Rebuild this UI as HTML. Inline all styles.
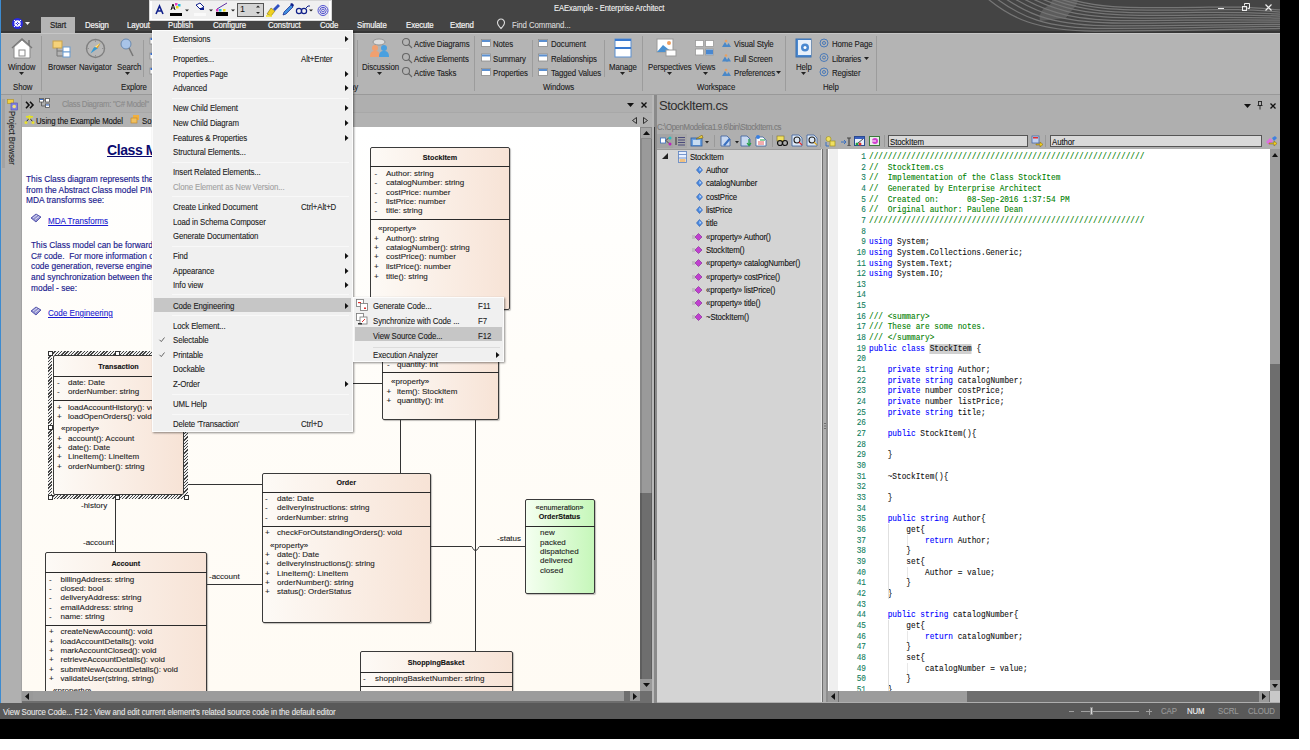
<!DOCTYPE html>
<html><head><meta charset="utf-8">
<style>
*{margin:0;padding:0;box-sizing:border-box}
html,body{width:1310px;height:750px;overflow:hidden;background:#fff;font-family:"Liberation Sans",sans-serif;}
.a{position:absolute;white-space:nowrap}
.t{position:absolute;white-space:nowrap;font-size:8.7px;letter-spacing:-0.1px;line-height:12px;color:#1a1a1a;-webkit-text-stroke:0.1px currentColor;transform:scaleX(0.9);transform-origin:0 0}
.mono{font-family:"Liberation Mono",monospace;white-space:pre}
#win{position:absolute;left:0;top:0;width:1280px;height:719px;background:#b4b4b4;overflow:hidden}
</style></head><body>
<!-- shadow -->
<div class="a" style="left:1280px;top:0;width:19px;height:739px;background:#000"></div>
<div class="a" style="left:0;top:719px;width:1299px;height:20px;background:#000"></div>
<div id="win">
  <!-- title bar -->
  <div class="a" style="left:0;top:0;width:1280px;height:33px;background:#444"></div>
<div class="a" style="left:0;top:31px;width:1280px;height:2px;background:#363636"></div>
<div class="a" style="left:0;top:33px;width:1280px;height:1px;background:#c6c6c6"></div>
  <div class="a" style="left:0;top:0;width:1px;height:719px;background:#3d8bd0"></div>
  <!-- RIBBON -->
<div class="t" style="left:554px;top:2px;font-size:8.5px;color:#f2f2f2">EAExample - Enterprise Architect</div>
<!-- title swirls -->
<svg class="a" style="left:960px;top:0" width="320" height="33" viewBox="0 0 320 33"><g fill="#5c5c5c"><path d="M80 21 C78 13 84 7 90 5 L92 0 L118 0 L116 6 C112 10 108 14 106 18Z"/></g><g fill="none"><path d="M28 -1 C50 17 75 31.0 135 31.0 S265 30.0 330 28.0" stroke="#767676" stroke-width="1.25"/><path d="M37 -1 C60 16 85 28.4 144 28.4 S265 27.2 330 26.1" stroke="#767676" stroke-width="1.25"/><path d="M46 -1 C70 15 95 25.8 153 25.8 S265 24.4 330 24.2" stroke="#767676" stroke-width="1.25"/><path d="M55 -1 C80 14 105 23.2 162 23.2 S265 21.6 330 22.3" stroke="#767676" stroke-width="1.25"/><path d="M64 -1 C90 13 115 20.6 171 20.6 S265 18.8 330 20.4" stroke="#767676" stroke-width="1.25"/><path d="M73 -1 C100 12 125 18.0 180 18.0 S265 16.0 330 18.5" stroke="#767676" stroke-width="1.25"/><path d="M82 -1 C110 11 135 15.4 189 15.4 S265 13.2 330 16.6" stroke="#767676" stroke-width="1.25"/><path d="M91 -1 C120 10 145 12.8 198 12.8 S265 10.4 330 14.7" stroke="#767676" stroke-width="1.25"/><path d="M100 -1 C130 9 155 10.2 207 10.2 S265 7.6 330 12.8" stroke="#767676" stroke-width="1.25"/><path d="M109 -1 C140 8 165 7.6 216 7.6 S265 4.8 330 10.9" stroke="#767676" stroke-width="1.25"/></g></svg>
<!-- window controls -->
<div class="a" style="left:1218px;top:8px;width:6px;height:1px;background:#eee"></div>
<svg class="a" style="left:1241px;top:3px" width="9" height="9"><path d="M3.5 2.5V.5h5v5h-2" fill="none" stroke="#eee" stroke-width="1"/><rect x="1.5" y="3.5" width="4" height="4" fill="none" stroke="#eee" stroke-width="1"/></svg>
<svg class="a" style="left:1264px;top:3px" width="9" height="9"><path d="M1.5 1.5L7.5 7.5M7.5 1.5L1.5 7.5" stroke="#eee" stroke-width="1.2"/></svg>
<!-- app icon -->
<svg class="a" style="left:11px;top:17px" width="22" height="13"><circle cx="6.5" cy="6.5" r="5.5" fill="#2a2ae0"/><circle cx="6.5" cy="6.5" r="2.5" fill="none" stroke="#fff" stroke-width="1.3"/><path d="M3 3L10 10M10 3L3 10" stroke="#fff" stroke-width="1"/><path d="M14 5h5l-2.5 3z" fill="#eee"/></svg>
<!-- tabs -->
<div class="a" style="left:41px;top:17px;width:34px;height:16px;background:#b4b4b4"></div>
<div class="t" style="left:50px;top:19px;color:#222;-webkit-text-stroke:0.2px #222">Start</div>
<div class="t" style="left:85px;top:19px;color:#f4f4f4;-webkit-text-stroke:0.2px #f4f4f4">Design</div>
<div class="t" style="left:127px;top:19px;color:#f4f4f4;-webkit-text-stroke:0.2px #f4f4f4">Layout</div>
<div class="t" style="left:168px;top:19px;color:#f4f4f4;-webkit-text-stroke:0.2px #f4f4f4">Publish</div>
<div class="t" style="left:213px;top:19px;color:#f4f4f4;-webkit-text-stroke:0.2px #f4f4f4">Configure</div>
<div class="t" style="left:268px;top:19px;color:#f4f4f4;-webkit-text-stroke:0.2px #f4f4f4">Construct</div>
<div class="t" style="left:320px;top:19px;color:#f4f4f4;-webkit-text-stroke:0.2px #f4f4f4">Code</div>
<div class="t" style="left:357px;top:19px;color:#f4f4f4;-webkit-text-stroke:0.2px #f4f4f4">Simulate</div>
<div class="t" style="left:406px;top:19px;color:#f4f4f4;-webkit-text-stroke:0.2px #f4f4f4">Execute</div>
<div class="t" style="left:450px;top:19px;color:#f4f4f4;-webkit-text-stroke:0.2px #f4f4f4">Extend</div>
<svg class="a" style="left:496px;top:18px" width="10" height="12"><path d="M5 1a3.5 3.5 0 0 1 3.5 3.5c0 2.5-3.5 6-3.5 6s-3.5-3.5-3.5-6A3.5 3.5 0 0 1 5 1z" fill="none" stroke="#ddd" stroke-width="1.1"/></svg>
<div class="t" style="left:512px;top:19px;color:#dcdcdc">Find Command...</div>
<!-- ribbon body bottom line -->
<div class="a" style="left:1px;top:94px;width:1279px;height:1px;background:#999"></div>
<!-- separators -->
<div class="a" style="left:41px;top:36px;width:1px;height:55px;background:#9c9c9c"></div>
<div class="a" style="left:143px;top:40px;width:1px;height:37px;background:#9c9c9c"></div>
<div class="a" style="left:357px;top:40px;width:1px;height:37px;background:#9c9c9c"></div>
<div class="a" style="left:474px;top:36px;width:1px;height:55px;background:#9c9c9c"></div>
<div class="a" style="left:532px;top:40px;width:1px;height:37px;background:#9c9c9c"></div>
<div class="a" style="left:604px;top:40px;width:1px;height:37px;background:#9c9c9c"></div>
<div class="a" style="left:642px;top:36px;width:1px;height:55px;background:#9c9c9c"></div>
<div class="a" style="left:785px;top:36px;width:1px;height:55px;background:#9c9c9c"></div>
<div class="a" style="left:876px;top:36px;width:1px;height:55px;background:#9c9c9c"></div>
<!-- Window -->
<svg class="a" style="left:11px;top:38px" width="22" height="21"><path d="M1 10L11 1L21 10" fill="none" stroke="#777" stroke-width="1.5"/><path d="M18 2v5" stroke="#777" stroke-width="1.5"/><path d="M3 9L11 2L19 9V20H3Z" fill="#fff" stroke="#888" stroke-width="1"/><rect x="8" y="12" width="6" height="6" fill="#fff" stroke="#888"/></svg>
<div class="t" style="left:8px;top:61px">Window</div>
<svg class="a" style="left:19px;top:72px" width="5" height="3"><path d="M0 0h5l-2.5 3z" fill="#222"/></svg>
<div class="t" style="left:13px;top:81px">Show</div>
<!-- Browser -->
<svg class="a" style="left:52px;top:40px" width="19" height="18"><rect x="1" y="1" width="9" height="7" fill="#f5d27a" stroke="#c9a24a"/><path d="M5 8v8h7M5 11h7" stroke="#777" fill="none"/><rect x="11" y="7" width="7" height="5" fill="#fff" stroke="#6a9bd0"/><rect x="11" y="12" width="7" height="5" fill="#fff" stroke="#6a9bd0"/></svg>
<div class="t" style="left:48px;top:61px">Browser</div>
<!-- Navigator -->
<svg class="a" style="left:85px;top:38px" width="21" height="21"><circle cx="10.5" cy="10.5" r="9" fill="#b8b8b8" stroke="#808080" stroke-width="1.4"/><path d="M10.5 2.5v1.5M10.5 17v1.5M2.5 10.5h1.5M17 10.5h1.5" stroke="#888" stroke-width=".8"/><path d="M15.5 5L8.5 10L5.5 15.5L12.5 10.5z" fill="#3a9ad0"/><path d="M15.5 5L10 8.5L12.5 10.5z" fill="#f0a020"/><path d="M15.5 5L10 8.5L11 9.5z" fill="#fff2a0"/></svg>
<div class="t" style="left:79px;top:61px">Navigator</div>
<!-- Search -->
<svg class="a" style="left:120px;top:38px" width="14" height="20"><circle cx="6" cy="6" r="5" fill="#a8c4e8" stroke="#6a8ab0"/><path d="M9 10l4 8" stroke="#777" stroke-width="1.5"/></svg>
<div class="t" style="left:117px;top:61px">Search</div>
<svg class="a" style="left:125px;top:72px" width="5" height="3"><path d="M0 0h5l-2.5 3z" fill="#222"/></svg>
<div class="t" style="left:121px;top:81px">Explore</div>
<!-- partial-icons --><svg class="a" style="left:148px;top:37px" width="5" height="40"><g fill="#fff" stroke="#888" stroke-width=".8"><rect x="2" y="1" width="6" height="6"/><rect x="2" y="16" width="6" height="6"/><rect x="2" y="31" width="6" height="6"/></g><g fill="#3a70d0"><rect x="2.5" y="1" width="2" height="2"/><rect x="2.5" y="16" width="2" height="2"/><rect x="2.5" y="31" width="2" height="2"/></g></svg>
<!-- Discussion -->
<svg class="a" style="left:369px;top:38px" width="22" height="20"><ellipse cx="10" cy="4" rx="6" ry="3" fill="#ddd" stroke="#888" stroke-width=".8"/><circle cx="6" cy="10" r="3" fill="#f0a070"/><path d="M1 19c0-5 2-6 5-6s5 1 5 6z" fill="#f0a070"/><circle cx="15" cy="10" r="3" fill="#4aa0e0"/><path d="M10 19c0-5 2-6 5-6s5 1 5 6z" fill="#4aa0e0"/></svg>
<div class="t" style="left:362px;top:61px">Discussion</div>
<svg class="a" style="left:377px;top:72px" width="5" height="3"><path d="M0 0h5l-2.5 3z" fill="#222"/></svg>
<div class="t" style="left:350px;top:81px">ay</div>
<!-- Active -->
<svg class="a" style="left:401px;top:37px" width="12" height="42"><g fill="none" stroke="#666" stroke-width="1.1"><circle cx="5" cy="5" r="3.5"/><path d="M7.5 7.5l3.5 3.5"/><circle cx="5" cy="20" r="3.5"/><path d="M7.5 22.5l3.5 3.5"/><circle cx="5" cy="34" r="3.5"/><path d="M7.5 36.5l3.5 3.5"/></g></svg>
<div class="t" style="left:414px;top:38px">Active Diagrams</div>
<div class="t" style="left:414px;top:53px">Active Elements</div>
<div class="t" style="left:414px;top:67px">Active Tasks</div>
<!-- Notes etc -->
<svg class="a" style="left:481px;top:39px" width="11" height="40"><g fill="#fff" stroke="#8a8a8a" stroke-width=".8"><rect x=".5" y=".5" width="9" height="7"/><rect x=".5" y="15" width="9" height="7"/><rect x=".5" y="29.5" width="9" height="7"/></g><g fill="#5b8fd0"><rect x="1" y="1" width="8" height="2"/><rect x="1" y="15.5" width="8" height="2"/><rect x="1" y="30" width="8" height="2"/></g></svg>
<div class="t" style="left:493px;top:38px">Notes</div>
<div class="t" style="left:493px;top:53px">Summary</div>
<div class="t" style="left:493px;top:67px">Properties</div>
<svg class="a" style="left:538px;top:39px" width="11" height="40"><g fill="#fff" stroke="#8a8a8a" stroke-width=".8"><rect x=".5" y=".5" width="9" height="7"/><rect x=".5" y="15" width="9" height="7"/><rect x=".5" y="29.5" width="9" height="7"/></g><g fill="#5b8fd0"><rect x="1" y="1" width="8" height="2"/><rect x="1" y="15.5" width="8" height="2"/><rect x="1" y="30" width="8" height="2"/></g></svg>
<div class="t" style="left:551px;top:38px">Document</div>
<div class="t" style="left:551px;top:53px">Relationships</div>
<div class="t" style="left:551px;top:67px">Tagged Values</div>
<div class="t" style="left:543px;top:81px">Windows</div>
<!-- Manage -->
<svg class="a" style="left:614px;top:38px" width="18" height="20"><rect x="1" y="1" width="16" height="18" fill="#fff" stroke="#5b8fd0" stroke-width="1"/><rect x="1" y="1" width="16" height="2" fill="#3a7ad0"/><rect x="1" y="9" width="16" height="2" fill="#3a7ad0"/></svg>
<div class="t" style="left:609px;top:61px">Manage</div>
<svg class="a" style="left:620px;top:72px" width="5" height="3"><path d="M0 0h5l-2.5 3z" fill="#222"/></svg>
<!-- Perspectives -->
<svg class="a" style="left:656px;top:38px" width="22" height="20"><rect x="1" y="1" width="16" height="13" fill="#fff" stroke="#999"/><path d="M1 14L7 7L12 11L17 14z" fill="#4a90d0"/><circle cx="13" cy="5" r="2" fill="#f0a060"/><rect x="10" y="12" width="10" height="6" fill="#fff" stroke="#999"/></svg>
<div class="t" style="left:648px;top:61px">Perspectives</div>
<svg class="a" style="left:667px;top:72px" width="5" height="3"><path d="M0 0h5l-2.5 3z" fill="#222"/></svg>
<!-- Views -->
<svg class="a" style="left:695px;top:40px" width="20" height="17"><g fill="#fff" stroke="#999" stroke-width=".8"><rect x=".5" y=".5" width="8" height="6"/><rect x="10.5" y=".5" width="8" height="6"/><rect x=".5" y="9" width="8" height="6"/><rect x="10.5" y="9" width="8" height="6"/></g><rect x="11" y="9.5" width="7" height="5" fill="#4a88d0"/></svg>
<div class="t" style="left:695px;top:61px">Views</div>
<svg class="a" style="left:703px;top:72px" width="5" height="3"><path d="M0 0h5l-2.5 3z" fill="#222"/></svg>
<svg class="a" style="left:721px;top:39px" width="11" height="40"><g fill="#4a88c8"><path d="M1 8l3-5 3 5z"/><path d="M5 8l2.5-4 2.5 4z"/><path d="M1 22.5l3-5 3 5z"/><path d="M5 22.5l2.5-4 2.5 4z"/><path d="M1 37l3-5 3 5z"/><path d="M5 37l2.5-4 2.5 4z"/></g><g fill="#e8a060"><circle cx="5" cy="2" r="1.3"/><circle cx="5" cy="16.5" r="1.3"/><circle cx="5" cy="31" r="1.3"/></g></svg>
<div class="t" style="left:734px;top:38px">Visual Style</div>
<div class="t" style="left:734px;top:53px">Full Screen</div>
<div class="t" style="left:734px;top:67px">Preferences</div>
<svg class="a" style="left:776px;top:71px" width="5" height="3"><path d="M0 0h5l-2.5 3z" fill="#222"/></svg>
<div class="t" style="left:697px;top:81px">Workspace</div>
<!-- Help -->
<svg class="a" style="left:795px;top:38px" width="18" height="20"><rect x="1" y="1" width="15" height="18" fill="#4a88d0" stroke="#3a70b0"/><rect x="3" y="2" width="13" height="15" fill="#e8f0fa"/><circle cx="10" cy="9.5" r="4" fill="#4a88d0"/><circle cx="10" cy="9.5" r="1.5" fill="#fff"/></svg>
<div class="t" style="left:796px;top:61px">Help</div>
<svg class="a" style="left:801px;top:72px" width="5" height="3"><path d="M0 0h5l-2.5 3z" fill="#222"/></svg>
<svg class="a" style="left:819px;top:38px" width="11" height="42"><g fill="none" stroke="#4a7ab8" stroke-width="1"><circle cx="5" cy="5" r="4"/><circle cx="5" cy="5" r="1.5"/><circle cx="5" cy="19.5" r="4"/><circle cx="5" cy="19.5" r="1.5"/><circle cx="5" cy="34" r="4"/><circle cx="5" cy="34" r="1.5"/></g></svg>
<div class="t" style="left:832px;top:38px">Home Page</div>
<div class="t" style="left:832px;top:53px">Libraries</div>
<svg class="a" style="left:864px;top:57px" width="5" height="3"><path d="M0 0h5l-2.5 3z" fill="#222"/></svg>
<div class="t" style="left:832px;top:67px">Register</div>
<div class="t" style="left:823px;top:81px">Help</div>

  <!--DIAG--><div class="a" style="left:1px;top:95px;width:21px;height:608px;background:#b0b0b0;border-right:1px solid #a2a2a2"></div>
<div class="a" style="left:2px;top:99px;width:3px;height:69px;background:#a3a3a3"></div>
<svg class="a" style="left:7px;top:99px" width="11" height="12"><rect x="0.5" y="0.5" width="6" height="4" fill="#f0d040" stroke="#b09020" stroke-width=".6"/><rect x="4" y="4" width="6.5" height="7" fill="#8080e0" stroke="#5050b0" stroke-width=".6"/><circle cx="7.2" cy="7.5" r="1.8" fill="#f0e080"/></svg>
<div class="t" style="left:17.5px;top:111px;transform-origin:0 0;transform:rotate(90deg) scaleX(0.9);color:#222">Project Browser</div>
<div class="a" style="left:22px;top:95px;width:630px;height:17px;background:#afafaf"></div>
<div class="a" style="left:22px;top:112px;width:630px;height:15px;background:#b2b2b2;border-top:1px solid #a8a8a8"></div>
<svg class="a" style="left:25px;top:101px" width="10" height="8"><path d="M1 .8L4 4 1 7.2M5 .8L8 4 5 7.2" fill="none" stroke="#111" stroke-width="1.6"/></svg>
<svg class="a" style="left:39px;top:98px" width="12" height="11"><g fill="#fff" stroke="#555" stroke-width=".8"><rect x=".5" y=".5" width="4" height="3.5"/><rect x="6.5" y=".5" width="4" height="3.5"/><rect x="6.5" y="6" width="4" height="3.5"/></g><path d="M4.5 2h2M2.5 4v4h4" stroke="#555" fill="none" stroke-width=".8"/><rect x="1" y="1" width="3" height="1" fill="#3a70d0"/><rect x="7" y="6.5" width="3" height="1" fill="#3a70d0"/></svg>
<div class="t" style="left:62px;top:98px;color:#8a8a8a;letter-spacing:-0.35px">Class Diagram: "C# Model"</div>
<svg class="a" style="left:627px;top:103px" width="7" height="4"><path d="M0 0h7l-3.5 4z" fill="#111"/></svg>
<svg class="a" style="left:641px;top:101.5px" width="6" height="6"><path d="M.5 .5l5 5M5.5 .5l-5 5" stroke="#111" stroke-width="1.4"/></svg>
<svg class="a" style="left:24px;top:114px" width="11" height="11"><path d="M5.5 1L2 3.5h7z" fill="#e8e030"/><rect x="2" y="2" width="7" height="1.5" fill="#e0e020"/><path d="M5.5 4L2 8M5.5 4L9 8" stroke="#223" stroke-width="1"/><circle cx="2" cy="8.5" r="1.5" fill="#e8e030"/><circle cx="9" cy="8.5" r="1.5" fill="#e8e030"/><circle cx="5.5" cy="4.5" r="1.2" fill="#e8e030"/></svg>
<div class="t" style="left:36px;top:115px;color:#111">Using the Example Model</div>
<div class="a" style="left:22px;top:127px;width:618px;height:1px;background:#8a8a8a"></div>
<svg class="a" style="left:130px;top:114px" width="10" height="10"><rect x="3" y="1" width="6" height="5" fill="#f0b040"/><rect x="1" y="4" width="6" height="5" fill="#f0c060" stroke="#c08020" stroke-width=".6"/></svg>
<div class="t" style="left:142px;top:115px;color:#111">So</div>
<svg class="a" style="left:632px;top:117px" width="5" height="7"><path d="M4.5 .5v6L.5 3.5z" fill="none" stroke="#222" stroke-width=".9"/></svg>
<svg class="a" style="left:643px;top:117px" width="5" height="7"><path d="M.5 .5v6l4-3z" fill="none" stroke="#222" stroke-width=".9"/></svg>
<div class="a" style="left:22px;top:127px;width:618px;height:564px;background:linear-gradient(180deg,#ffffff 0%,#fffdf9 40%,#fffbf4 100%);overflow:hidden" id="canvas">
<div class="a" style="left:0;top:0;width:619px;height:6px;background:#fff"></div>
<div class="a" style="left:85px;top:15px;font-size:14px;font-weight:bold;color:#0b0b70;text-decoration:underline;line-height:16px;letter-spacing:-0.4px">Class Model</div>
<div class="a" style="left:4px;top:47px;font-size:8px;line-height:10px;color:#222;-webkit-text-stroke:0.1px currentColor;color:#1a1a8e;font-size:9px;transform:scaleX(0.93);transform-origin:0 0;-webkit-text-stroke:0.15px currentColor">This Class diagram represents the Class model for the</div>
<div class="a" style="left:4px;top:58px;font-size:8px;line-height:10px;color:#222;-webkit-text-stroke:0.1px currentColor;color:#1a1a8e;font-size:9px;transform:scaleX(0.93);transform-origin:0 0;-webkit-text-stroke:0.15px currentColor">from the Abstract Class model PIM using the C# and</div>
<div class="a" style="left:4px;top:68px;font-size:8px;line-height:10px;color:#222;-webkit-text-stroke:0.1px currentColor;color:#1a1a8e;font-size:9px;transform:scaleX(0.93);transform-origin:0 0;-webkit-text-stroke:0.15px currentColor">MDA transforms see:</div>
<div class="a" style="left:9px;top:113px;font-size:8px;line-height:10px;color:#222;-webkit-text-stroke:0.1px currentColor;color:#1a1a8e;font-size:9px;transform:scaleX(0.93);transform-origin:0 0;-webkit-text-stroke:0.15px currentColor">This Class model can be forward engineered to</div>
<div class="a" style="left:9px;top:124px;font-size:8px;line-height:10px;color:#222;-webkit-text-stroke:0.1px currentColor;color:#1a1a8e;font-size:9px;transform:scaleX(0.93);transform-origin:0 0;-webkit-text-stroke:0.15px currentColor">C# code.&nbsp; For more information on</div>
<div class="a" style="left:9px;top:134px;font-size:8px;line-height:10px;color:#222;-webkit-text-stroke:0.1px currentColor;color:#1a1a8e;font-size:9px;transform:scaleX(0.93);transform-origin:0 0;-webkit-text-stroke:0.15px currentColor">code generation, reverse engineering</div>
<div class="a" style="left:9px;top:145px;font-size:8px;line-height:10px;color:#222;-webkit-text-stroke:0.1px currentColor;color:#1a1a8e;font-size:9px;transform:scaleX(0.93);transform-origin:0 0;-webkit-text-stroke:0.15px currentColor">and synchronization between the code and</div>
<div class="a" style="left:9px;top:156px;font-size:8px;line-height:10px;color:#222;-webkit-text-stroke:0.1px currentColor;color:#1a1a8e;font-size:9px;transform:scaleX(0.93);transform-origin:0 0;-webkit-text-stroke:0.15px currentColor">model - see:</div>
<svg class="a" style="left:8px;top:86px" width="12" height="10"><path d="M1 5L6 1L11 4L6 9Z" fill="#9090d0" stroke="#4040a0" stroke-width=".8"/><path d="M3 5l4-3M5 6.5l4-3" stroke="#fff" stroke-width=".7"/></svg>
<div class="a" style="left:26px;top:89px;font-size:8px;line-height:10px;color:#222;-webkit-text-stroke:0.1px currentColor;color:#1a1ad0;text-decoration:underline;font-size:8.5px;transform:scaleX(0.95);transform-origin:0 0">MDA Transforms</div>
<svg class="a" style="left:8px;top:179px" width="12" height="10"><path d="M1 5L6 1L11 4L6 9Z" fill="#9090d0" stroke="#4040a0" stroke-width=".8"/><path d="M3 5l4-3M5 6.5l4-3" stroke="#fff" stroke-width=".7"/></svg>
<div class="a" style="left:26px;top:181px;font-size:8px;line-height:10px;color:#222;-webkit-text-stroke:0.1px currentColor;color:#1a1ad0;text-decoration:underline;font-size:8.5px;transform:scaleX(0.95);transform-origin:0 0">Code Engineering</div>
<div class="a" style="left:348px;top:19.5px;width:140px;height:163.5px;border:1px solid #3a3a3a;border-radius:2px;background:linear-gradient(90deg,#fdfaf6,#f7e3d6);box-shadow:1px 1px 1px rgba(0,0,0,.25)"></div>
<div class="a" style="left:348px;top:38.5px;width:140px;height:1px;background:#2a2a2a"></div>
<div class="a" style="left:352.5px;top:42px;font-size:8px;line-height:10px;color:#222;-webkit-text-stroke:0.1px currentColor;">-</div>
<div class="a" style="left:364px;top:42px;font-size:8px;line-height:10px;color:#222;-webkit-text-stroke:0.1px currentColor;">Author: string</div>
<div class="a" style="left:352.5px;top:51px;font-size:8px;line-height:10px;color:#222;-webkit-text-stroke:0.1px currentColor;">-</div>
<div class="a" style="left:364px;top:51px;font-size:8px;line-height:10px;color:#222;-webkit-text-stroke:0.1px currentColor;">catalogNumber: string</div>
<div class="a" style="left:352.5px;top:61px;font-size:8px;line-height:10px;color:#222;-webkit-text-stroke:0.1px currentColor;">-</div>
<div class="a" style="left:364px;top:61px;font-size:8px;line-height:10px;color:#222;-webkit-text-stroke:0.1px currentColor;">costPrice: number</div>
<div class="a" style="left:352.5px;top:70px;font-size:8px;line-height:10px;color:#222;-webkit-text-stroke:0.1px currentColor;">-</div>
<div class="a" style="left:364px;top:70px;font-size:8px;line-height:10px;color:#222;-webkit-text-stroke:0.1px currentColor;">listPrice: number</div>
<div class="a" style="left:352.5px;top:79px;font-size:8px;line-height:10px;color:#222;-webkit-text-stroke:0.1px currentColor;">-</div>
<div class="a" style="left:364px;top:79px;font-size:8px;line-height:10px;color:#222;-webkit-text-stroke:0.1px currentColor;">title: string</div>
<div class="a" style="left:348px;top:91.5px;width:140px;height:1px;background:#2a2a2a"></div>
<div class="a" style="left:356px;top:97px;font-size:8px;line-height:10px;color:#222;-webkit-text-stroke:0.1px currentColor;">&#171;property&#187;</div>
<div class="a" style="left:352px;top:107px;font-size:8px;line-height:10px;color:#222;-webkit-text-stroke:0.1px currentColor;">+</div>
<div class="a" style="left:364px;top:107px;font-size:8px;line-height:10px;color:#222;-webkit-text-stroke:0.1px currentColor;">Author(): string</div>
<div class="a" style="left:352px;top:116px;font-size:8px;line-height:10px;color:#222;-webkit-text-stroke:0.1px currentColor;">+</div>
<div class="a" style="left:364px;top:116px;font-size:8px;line-height:10px;color:#222;-webkit-text-stroke:0.1px currentColor;">catalogNumber(): string</div>
<div class="a" style="left:352px;top:125px;font-size:8px;line-height:10px;color:#222;-webkit-text-stroke:0.1px currentColor;">+</div>
<div class="a" style="left:364px;top:125px;font-size:8px;line-height:10px;color:#222;-webkit-text-stroke:0.1px currentColor;">costPrice(): number</div>
<div class="a" style="left:352px;top:135px;font-size:8px;line-height:10px;color:#222;-webkit-text-stroke:0.1px currentColor;">+</div>
<div class="a" style="left:364px;top:135px;font-size:8px;line-height:10px;color:#222;-webkit-text-stroke:0.1px currentColor;">listPrice(): number</div>
<div class="a" style="left:352px;top:145px;font-size:8px;line-height:10px;color:#222;-webkit-text-stroke:0.1px currentColor;">+</div>
<div class="a" style="left:364px;top:145px;font-size:8px;line-height:10px;color:#222;-webkit-text-stroke:0.1px currentColor;">title(): string</div>
<div class="a" style="left:348px;top:26px;width:140px;text-align:center;font-size:7.2px;-webkit-text-stroke:0.1px currentColor;line-height:10px;color:#111;font-weight:bold">StockItem</div>
<div class="a" style="left:359.5px;top:193px;width:117.5px;height:99.5px;border:1px solid #3a3a3a;border-radius:2px;background:linear-gradient(90deg,#fdfaf6,#f7e3d6);box-shadow:1px 1px 1px rgba(0,0,0,.25)"></div>
<div class="a" style="left:359.5px;top:214px;width:117.5px;height:1px;background:#2a2a2a"></div>
<div class="a" style="left:365px;top:224px;font-size:8px;line-height:10px;color:#222;-webkit-text-stroke:0.1px currentColor;">-</div>
<div class="a" style="left:375px;top:224px;font-size:8px;line-height:10px;color:#222;-webkit-text-stroke:0.1px currentColor;">item: StockItem</div>
<div class="a" style="left:365px;top:233px;font-size:8px;line-height:10px;color:#222;-webkit-text-stroke:0.1px currentColor;">-</div>
<div class="a" style="left:375px;top:233px;font-size:8px;line-height:10px;color:#222;-webkit-text-stroke:0.1px currentColor;">quantity: int</div>
<div class="a" style="left:359.5px;top:244.5px;width:117.5px;height:1px;background:#2a2a2a"></div>
<div class="a" style="left:369px;top:250px;font-size:8px;line-height:10px;color:#222;-webkit-text-stroke:0.1px currentColor;">&#171;property&#187;</div>
<div class="a" style="left:364.5px;top:260px;font-size:8px;line-height:10px;color:#222;-webkit-text-stroke:0.1px currentColor;">+</div>
<div class="a" style="left:375px;top:260px;font-size:8px;line-height:10px;color:#222;-webkit-text-stroke:0.1px currentColor;">item(): StockItem</div>
<div class="a" style="left:364.5px;top:269px;font-size:8px;line-height:10px;color:#222;-webkit-text-stroke:0.1px currentColor;">+</div>
<div class="a" style="left:375px;top:269px;font-size:8px;line-height:10px;color:#222;-webkit-text-stroke:0.1px currentColor;">quantity(): int</div>
<div class="a" style="left:359.5px;top:200px;width:117.5px;text-align:center;font-size:7.2px;-webkit-text-stroke:0.1px currentColor;line-height:10px;color:#111;font-weight:bold">LineItem</div>
<div class="a" style="left:31px;top:228px;width:131px;height:140px;border:1px solid #3a3a3a;border-radius:2px;background:linear-gradient(90deg,#fdfaf6,#f7e3d6);box-shadow:1px 1px 1px rgba(0,0,0,.25)"></div>
<div class="a" style="left:31px;top:248.5px;width:131px;height:1px;background:#2a2a2a"></div>
<div class="a" style="left:35px;top:251px;font-size:8px;line-height:10px;color:#222;-webkit-text-stroke:0.1px currentColor;">-</div>
<div class="a" style="left:46px;top:251px;font-size:8px;line-height:10px;color:#222;-webkit-text-stroke:0.1px currentColor;">date: Date</div>
<div class="a" style="left:35px;top:260px;font-size:8px;line-height:10px;color:#222;-webkit-text-stroke:0.1px currentColor;">-</div>
<div class="a" style="left:46px;top:260px;font-size:8px;line-height:10px;color:#222;-webkit-text-stroke:0.1px currentColor;">orderNumber: string</div>
<div class="a" style="left:31px;top:273px;width:131px;height:1px;background:#2a2a2a"></div>
<div class="a" style="left:35px;top:276px;font-size:8px;line-height:10px;color:#222;-webkit-text-stroke:0.1px currentColor;">+</div>
<div class="a" style="left:46px;top:276px;font-size:8px;line-height:10px;color:#222;-webkit-text-stroke:0.1px currentColor;">loadAccountHistory(): void</div>
<div class="a" style="left:35px;top:285px;font-size:8px;line-height:10px;color:#222;-webkit-text-stroke:0.1px currentColor;">+</div>
<div class="a" style="left:46px;top:285px;font-size:8px;line-height:10px;color:#222;-webkit-text-stroke:0.1px currentColor;">loadOpenOrders(): void</div>
<div class="a" style="left:39px;top:297px;font-size:8px;line-height:10px;color:#222;-webkit-text-stroke:0.1px currentColor;">&#171;property&#187;</div>
<div class="a" style="left:35px;top:307px;font-size:8px;line-height:10px;color:#222;-webkit-text-stroke:0.1px currentColor;">+</div>
<div class="a" style="left:46px;top:307px;font-size:8px;line-height:10px;color:#222;-webkit-text-stroke:0.1px currentColor;">account(): Account</div>
<div class="a" style="left:35px;top:316px;font-size:8px;line-height:10px;color:#222;-webkit-text-stroke:0.1px currentColor;">+</div>
<div class="a" style="left:46px;top:316px;font-size:8px;line-height:10px;color:#222;-webkit-text-stroke:0.1px currentColor;">date(): Date</div>
<div class="a" style="left:35px;top:325px;font-size:8px;line-height:10px;color:#222;-webkit-text-stroke:0.1px currentColor;">+</div>
<div class="a" style="left:46px;top:325px;font-size:8px;line-height:10px;color:#222;-webkit-text-stroke:0.1px currentColor;">LineItem(): LineItem</div>
<div class="a" style="left:35px;top:335px;font-size:8px;line-height:10px;color:#222;-webkit-text-stroke:0.1px currentColor;">+</div>
<div class="a" style="left:46px;top:335px;font-size:8px;line-height:10px;color:#222;-webkit-text-stroke:0.1px currentColor;">orderNumber(): string</div>
<div class="a" style="left:31px;top:235px;width:131px;text-align:center;font-size:7.2px;-webkit-text-stroke:0.1px currentColor;line-height:10px;color:#111;font-weight:bold">Transaction</div>
<div class="a" style="left:26px;top:224px;width:140px;height:148px;border:4px solid transparent;border-image:repeating-linear-gradient(-45deg,#444 0 1px,#eeeeee 1px 2.3px) 4;pointer-events:none"></div>
<div class="a" style="left:26px;top:224px;width:5px;height:5px;background:#fff;border:1px solid #333"></div>
<div class="a" style="left:26px;top:298px;width:5px;height:5px;background:#fff;border:1px solid #333"></div>
<div class="a" style="left:26px;top:368px;width:5px;height:5px;background:#fff;border:1px solid #333"></div>
<div class="a" style="left:93px;top:224px;width:5px;height:5px;background:#fff;border:1px solid #333"></div>
<div class="a" style="left:93px;top:368px;width:5px;height:5px;background:#fff;border:1px solid #333"></div>
<div class="a" style="left:162px;top:224px;width:5px;height:5px;background:#fff;border:1px solid #333"></div>
<div class="a" style="left:162px;top:298px;width:5px;height:5px;background:#fff;border:1px solid #333"></div>
<div class="a" style="left:162px;top:368px;width:5px;height:5px;background:#fff;border:1px solid #333"></div>
<div class="a" style="left:23px;top:425px;width:161.5px;height:168px;border:1px solid #3a3a3a;border-radius:2px;background:linear-gradient(90deg,#fdfaf6,#f7e3d6);box-shadow:1px 1px 1px rgba(0,0,0,.25)"></div>
<div class="a" style="left:23px;top:444.5px;width:161.5px;height:1px;background:#2a2a2a"></div>
<div class="a" style="left:27px;top:448px;font-size:8px;line-height:10px;color:#222;-webkit-text-stroke:0.1px currentColor;">-</div>
<div class="a" style="left:38.5px;top:448px;font-size:8px;line-height:10px;color:#222;-webkit-text-stroke:0.1px currentColor;">billingAddress: string</div>
<div class="a" style="left:27px;top:457px;font-size:8px;line-height:10px;color:#222;-webkit-text-stroke:0.1px currentColor;">-</div>
<div class="a" style="left:38.5px;top:457px;font-size:8px;line-height:10px;color:#222;-webkit-text-stroke:0.1px currentColor;">closed: bool</div>
<div class="a" style="left:27px;top:466px;font-size:8px;line-height:10px;color:#222;-webkit-text-stroke:0.1px currentColor;">-</div>
<div class="a" style="left:38.5px;top:466px;font-size:8px;line-height:10px;color:#222;-webkit-text-stroke:0.1px currentColor;">deliveryAddress: string</div>
<div class="a" style="left:27px;top:476px;font-size:8px;line-height:10px;color:#222;-webkit-text-stroke:0.1px currentColor;">-</div>
<div class="a" style="left:38.5px;top:476px;font-size:8px;line-height:10px;color:#222;-webkit-text-stroke:0.1px currentColor;">emailAddress: string</div>
<div class="a" style="left:27px;top:485px;font-size:8px;line-height:10px;color:#222;-webkit-text-stroke:0.1px currentColor;">-</div>
<div class="a" style="left:38.5px;top:485px;font-size:8px;line-height:10px;color:#222;-webkit-text-stroke:0.1px currentColor;">name: string</div>
<div class="a" style="left:23px;top:497.5px;width:161.5px;height:1px;background:#2a2a2a"></div>
<div class="a" style="left:27px;top:500px;font-size:8px;line-height:10px;color:#222;-webkit-text-stroke:0.1px currentColor;">+</div>
<div class="a" style="left:38.5px;top:500px;font-size:8px;line-height:10px;color:#222;-webkit-text-stroke:0.1px currentColor;">createNewAccount(): void</div>
<div class="a" style="left:27px;top:510px;font-size:8px;line-height:10px;color:#222;-webkit-text-stroke:0.1px currentColor;">+</div>
<div class="a" style="left:38.5px;top:510px;font-size:8px;line-height:10px;color:#222;-webkit-text-stroke:0.1px currentColor;">loadAccountDetails(): void</div>
<div class="a" style="left:27px;top:519px;font-size:8px;line-height:10px;color:#222;-webkit-text-stroke:0.1px currentColor;">+</div>
<div class="a" style="left:38.5px;top:519px;font-size:8px;line-height:10px;color:#222;-webkit-text-stroke:0.1px currentColor;">markAccountClosed(): void</div>
<div class="a" style="left:27px;top:528px;font-size:8px;line-height:10px;color:#222;-webkit-text-stroke:0.1px currentColor;">+</div>
<div class="a" style="left:38.5px;top:528px;font-size:8px;line-height:10px;color:#222;-webkit-text-stroke:0.1px currentColor;">retrieveAccountDetails(): void</div>
<div class="a" style="left:27px;top:538px;font-size:8px;line-height:10px;color:#222;-webkit-text-stroke:0.1px currentColor;">+</div>
<div class="a" style="left:38.5px;top:538px;font-size:8px;line-height:10px;color:#222;-webkit-text-stroke:0.1px currentColor;">submitNewAccountDetails(): void</div>
<div class="a" style="left:27px;top:547px;font-size:8px;line-height:10px;color:#222;-webkit-text-stroke:0.1px currentColor;">+</div>
<div class="a" style="left:38.5px;top:547px;font-size:8px;line-height:10px;color:#222;-webkit-text-stroke:0.1px currentColor;">validateUser(string, string)</div>
<div class="a" style="left:31px;top:559px;font-size:8px;line-height:10px;color:#222;-webkit-text-stroke:0.1px currentColor;">&#171;property&#187;</div>
<div class="a" style="left:23px;top:432px;width:161.5px;text-align:center;font-size:7.2px;-webkit-text-stroke:0.1px currentColor;line-height:10px;color:#111;font-weight:bold">Account</div>
<div class="a" style="left:239.5px;top:345.5px;width:169.5px;height:150.5px;border:1px solid #3a3a3a;border-radius:2px;background:linear-gradient(90deg,#fdfaf6,#f7e3d6);box-shadow:1px 1px 1px rgba(0,0,0,.25)"></div>
<div class="a" style="left:239.5px;top:364.8px;width:169.5px;height:1px;background:#2a2a2a"></div>
<div class="a" style="left:243px;top:367px;font-size:8px;line-height:10px;color:#222;-webkit-text-stroke:0.1px currentColor;">-</div>
<div class="a" style="left:255px;top:367px;font-size:8px;line-height:10px;color:#222;-webkit-text-stroke:0.1px currentColor;">date: Date</div>
<div class="a" style="left:243px;top:376px;font-size:8px;line-height:10px;color:#222;-webkit-text-stroke:0.1px currentColor;">-</div>
<div class="a" style="left:255px;top:376px;font-size:8px;line-height:10px;color:#222;-webkit-text-stroke:0.1px currentColor;">deliveryInstructions: string</div>
<div class="a" style="left:243px;top:386px;font-size:8px;line-height:10px;color:#222;-webkit-text-stroke:0.1px currentColor;">-</div>
<div class="a" style="left:255px;top:386px;font-size:8px;line-height:10px;color:#222;-webkit-text-stroke:0.1px currentColor;">orderNumber: string</div>
<div class="a" style="left:239.5px;top:398.6px;width:169.5px;height:1px;background:#2a2a2a"></div>
<div class="a" style="left:243px;top:401px;font-size:8px;line-height:10px;color:#222;-webkit-text-stroke:0.1px currentColor;">+</div>
<div class="a" style="left:255px;top:401px;font-size:8px;line-height:10px;color:#222;-webkit-text-stroke:0.1px currentColor;">checkForOutstandingOrders(): void</div>
<div class="a" style="left:248px;top:414px;font-size:8px;line-height:10px;color:#222;-webkit-text-stroke:0.1px currentColor;">&#171;property&#187;</div>
<div class="a" style="left:243px;top:423px;font-size:8px;line-height:10px;color:#222;-webkit-text-stroke:0.1px currentColor;">+</div>
<div class="a" style="left:255px;top:423px;font-size:8px;line-height:10px;color:#222;-webkit-text-stroke:0.1px currentColor;">date(): Date</div>
<div class="a" style="left:243px;top:432px;font-size:8px;line-height:10px;color:#222;-webkit-text-stroke:0.1px currentColor;">+</div>
<div class="a" style="left:255px;top:432px;font-size:8px;line-height:10px;color:#222;-webkit-text-stroke:0.1px currentColor;">deliveryInstructions(): string</div>
<div class="a" style="left:243px;top:442px;font-size:8px;line-height:10px;color:#222;-webkit-text-stroke:0.1px currentColor;">+</div>
<div class="a" style="left:255px;top:442px;font-size:8px;line-height:10px;color:#222;-webkit-text-stroke:0.1px currentColor;">LineItem(): LineItem</div>
<div class="a" style="left:243px;top:451px;font-size:8px;line-height:10px;color:#222;-webkit-text-stroke:0.1px currentColor;">+</div>
<div class="a" style="left:255px;top:451px;font-size:8px;line-height:10px;color:#222;-webkit-text-stroke:0.1px currentColor;">orderNumber(): string</div>
<div class="a" style="left:243px;top:460px;font-size:8px;line-height:10px;color:#222;-webkit-text-stroke:0.1px currentColor;">+</div>
<div class="a" style="left:255px;top:460px;font-size:8px;line-height:10px;color:#222;-webkit-text-stroke:0.1px currentColor;">status(): OrderStatus</div>
<div class="a" style="left:239.5px;top:351px;width:169.5px;text-align:center;font-size:7.2px;-webkit-text-stroke:0.1px currentColor;line-height:10px;color:#111;font-weight:bold">Order</div>
<div class="a" style="left:502.5px;top:372px;width:70.0px;height:94.5px;border:1px solid #3a3a3a;border-radius:2px;background:linear-gradient(90deg,#f4fff0,#c6f7ba);box-shadow:1px 1px 1px rgba(0,0,0,.25)"></div>
<div class="a" style="left:502.5px;top:398.6px;width:70.0px;height:1px;background:#2a2a2a"></div>
<div class="a" style="left:518px;top:401px;font-size:8px;line-height:10px;color:#222;-webkit-text-stroke:0.1px currentColor;">new</div>
<div class="a" style="left:518px;top:411px;font-size:8px;line-height:10px;color:#222;-webkit-text-stroke:0.1px currentColor;">packed</div>
<div class="a" style="left:518px;top:420px;font-size:8px;line-height:10px;color:#222;-webkit-text-stroke:0.1px currentColor;">dispatched</div>
<div class="a" style="left:518px;top:429px;font-size:8px;line-height:10px;color:#222;-webkit-text-stroke:0.1px currentColor;">delivered</div>
<div class="a" style="left:518px;top:439px;font-size:8px;line-height:10px;color:#222;-webkit-text-stroke:0.1px currentColor;">closed</div>
<div class="a" style="left:502.5px;top:376px;width:70.0px;text-align:center;font-size:7.2px;-webkit-text-stroke:0.1px currentColor;line-height:10px;color:#111;">&#171;enumeration&#187;</div>
<div class="a" style="left:502.5px;top:385px;width:70.0px;text-align:center;font-size:7.2px;-webkit-text-stroke:0.1px currentColor;line-height:10px;color:#111;font-weight:bold">OrderStatus</div>
<div class="a" style="left:337.5px;top:524px;width:153.0px;height:69px;border:1px solid #3a3a3a;border-radius:2px;background:linear-gradient(90deg,#fdfaf6,#f7e3d6);box-shadow:1px 1px 1px rgba(0,0,0,.25)"></div>
<div class="a" style="left:337.5px;top:544.5px;width:153.0px;height:1px;background:#2a2a2a"></div>
<div class="a" style="left:341px;top:547px;font-size:8px;line-height:10px;color:#222;-webkit-text-stroke:0.1px currentColor;">-</div>
<div class="a" style="left:353px;top:547px;font-size:8px;line-height:10px;color:#222;-webkit-text-stroke:0.1px currentColor;">shoppingBasketNumber: string</div>
<div class="a" style="left:337.5px;top:559px;width:153.0px;height:1px;background:#2a2a2a"></div>
<div class="a" style="left:337.5px;top:531px;width:153.0px;text-align:center;font-size:7.2px;-webkit-text-stroke:0.1px currentColor;line-height:10px;color:#111;font-weight:bold">ShoppingBasket</div>
<div class="a" style="left:166px;top:356.5px;width:73.5px;height:1px;background:#333"></div>
<div class="a" style="left:166px;top:256px;width:193.5px;height:1px;background:#333"></div>
<div class="a" style="left:93px;top:372px;width:1px;height:53px;background:#333"></div>
<div class="a" style="left:184.5px;top:457px;width:55.0px;height:1px;background:#333"></div>
<div class="a" style="left:378px;top:292.5px;width:1px;height:53.0px;background:#333"></div>
<div class="a" style="left:453px;top:292.5px;width:1px;height:231.5px;background:#333"></div>
<div class="a" style="left:409px;top:419px;width:40px;height:1px;background:#333"></div>
<div class="a" style="left:458px;top:419px;width:44.5px;height:1px;background:#333"></div>
<svg class="a" style="left:448px;top:417px" width="11" height="8"><path d="M0.5 2.5 L1.5 2.5 C2.5 2.5 3 6.5 5.5 6.5 C8 6.5 8.5 2.5 9.5 2.5 L10.5 2.5" fill="none" stroke="#333" stroke-width="1"/></svg>
<div class="a" style="left:59px;top:374px;font-size:8px;line-height:10px;color:#222;-webkit-text-stroke:0.1px currentColor;">-history</div>
<div class="a" style="left:61px;top:411px;font-size:8px;line-height:10px;color:#222;-webkit-text-stroke:0.1px currentColor;">-account</div>
<div class="a" style="left:187px;top:445px;font-size:8px;line-height:10px;color:#222;-webkit-text-stroke:0.1px currentColor;">-account</div>
<div class="a" style="left:475px;top:407px;font-size:8px;line-height:10px;color:#222;-webkit-text-stroke:0.1px currentColor;">-status</div>
</div>
<div class="a" style="left:640px;top:127px;width:12px;height:564px;background:#6e6e6e;border-left:2px solid #5e5e5e;border-right:1px solid #5e5e5e"></div>
<div class="a" style="left:640px;top:127px;width:12px;height:12px;background:#a6a6a6;border:1px solid #8a8a8a"></div>
<svg class="a" style="left:643px;top:131px" width="7" height="4"><path d="M0 4h7L3.5 0z" fill="#111"/></svg>
<div class="a" style="left:640px;top:139px;width:12px;height:354px;background:#9a9a9a;border-left:2px solid #878787;border-right:1px solid #7a7a7a"></div>
<div class="a" style="left:640px;top:679px;width:12px;height:12px;background:#999"></div>
<svg class="a" style="left:643px;top:683px" width="7" height="4"><path d="M0 0h7L3.5 4z" fill="#111"/></svg>
<div class="a" style="left:22px;top:691px;width:630px;height:12px;background:#6e6e6e"></div>
<div class="a" style="left:33px;top:691px;width:591px;height:10px;background:#9c9c9c"></div>
<div class="a" style="left:22px;top:691px;width:11px;height:10px;background:#999"></div>
<svg class="a" style="left:25px;top:693px" width="4" height="7"><path d="M4 0v7L0 3.5z" fill="#111"/></svg>
<div class="a" style="left:630px;top:691px;width:10px;height:10px;background:#999"></div>
<svg class="a" style="left:633px;top:693px" width="4" height="7"><path d="M0 0v7l4-3.5z" fill="#111"/></svg>
<div class="a" style="left:652px;top:95px;width:5px;height:608px;background:#8a8a8a;border-left:2px solid #b8b8b8"></div>
<div class="a" style="left:654px;top:127px;width:1px;height:433px;background:#3a3a3a"></div><!--/DIAG-->
  <!--RIGHT--><div class="a" style="left:657px;top:95px;width:623px;height:608px;background:#afafaf"></div>
<div class="a" style="left:659px;top:98px;font-size:13px;letter-spacing:-0.5px;line-height:16px;color:#2e2e2e">StockItem.cs</div>
<svg class="a" style="left:1244px;top:104px" width="7" height="4"><path d="M0 0h7l-3.5 4z" fill="#111"/></svg>
<svg class="a" style="left:1257px;top:101px" width="6" height="9"><path d="M1 .5h4M1.5 .5v4h3v-4M.5 4.5h5M3 4.5v4" stroke="#222" fill="none" stroke-width=".9"/></svg>
<svg class="a" style="left:1270px;top:103px" width="6" height="6"><path d="M.5 .5l5 5M5.5 .5l-5 5" stroke="#111" stroke-width="1.3"/></svg>
<div class="t" style="left:657px;top:121px;letter-spacing:-0.4px;color:#7a7a7a">C:\OpenModelica1.9.6\bin\StockItem.cs</div>
<div class="a" style="left:657px;top:134px;width:16px;height:14px;background:#a4a4a4"></div>
<div class="a" style="left:673px;top:134px;width:14px;height:14px;background:#a8a8a8"></div>

<svg class="a" style="left:660px;top:136px" width="12" height="10"><rect x="0.5" y="2" width="5" height="5" fill="#fff" stroke="#3a70c0" stroke-width=".8"/><path d="M6 4.5l3-3M6 4.5l3 3" stroke="#333" stroke-width=".8"/><circle cx="10" cy="2" r="1.5" fill="#20c0c0"/><circle cx="10" cy="8" r="1.5" fill="#c020c0"/></svg>
<svg class="a" style="left:675px;top:136px" width="11" height="10"><g stroke="#333" stroke-width="1"><path d="M1 1v8"/><path d="M3 1.5h7M3 4h7M3 6.5h7M3 9h7" stroke="#4a4a7a"/></g></svg>
<svg class="a" style="left:690px;top:135px" width="19" height="12"><rect x="1" y="3" width="11" height="8" fill="#6aa0e0" stroke="#2a5aa0" stroke-width=".8"/><rect x="3" y="5" width="7" height="5" fill="#c8dcf0"/><path d="M6 4L12 0L13 3z" fill="#e8d040" stroke="#806010" stroke-width=".6"/><path d="M15 6h4l-2 2.5z" fill="#222"/></svg>
<svg class="a" style="left:720px;top:135px" width="19" height="12"><path d="M1 1h6l3 3v7H1z" fill="#c8d8f0" stroke="#3a60a0" stroke-width=".8"/><path d="M3 10L9 3l1.5 1.5L5 11z" fill="#3a70c0"/><path d="M15 6h4l-2 2.5z" fill="#222"/></svg>
<svg class="a" style="left:740px;top:135px" width="12" height="12"><path d="M1 1h6l3 3v7H1z" fill="#c8d8f0" stroke="#3a60a0" stroke-width=".8"/><path d="M9 4v6M7 8l2 2.5L11 8" stroke="#20a040" fill="none" stroke-width="1.2"/></svg>
<svg class="a" style="left:755px;top:134px" width="12" height="13"><path d="M1 3h7l3 3v6H1z" fill="#fff" stroke="#3a60a0" stroke-width=".8"/><circle cx="3" cy="3" r="2" fill="#3a80e0"/><path d="M3 8h6M3 10h6" stroke="#e03030" stroke-width=".8"/><path d="M5 6h5" stroke="#20a040"/></svg>
<svg class="a" style="left:776px;top:135px" width="12" height="12"><rect x="1" y="1" width="7" height="5" fill="#f0e060" stroke="#807020" stroke-width=".6"/><circle cx="4" cy="8" r="2.5" fill="none" stroke="#111" stroke-width="1.2"/><circle cx="9" cy="8" r="2.5" fill="none" stroke="#111" stroke-width="1.2"/></svg>
<svg class="a" style="left:791px;top:134px" width="12" height="13"><path d="M1 1h7l3 3v8H1z" fill="#dde8f5" stroke="#3a60a0" stroke-width=".8"/><circle cx="6" cy="6" r="3" fill="none" stroke="#222" stroke-width="1.1"/><path d="M8 8l3 3" stroke="#e03030" stroke-width="1.3"/></svg>
<svg class="a" style="left:806px;top:134px" width="12" height="13"><path d="M1 1h7l3 3v8H1z" fill="#dde8f5" stroke="#3a60a0" stroke-width=".8"/><circle cx="6" cy="6" r="3" fill="none" stroke="#222" stroke-width="1.1"/><path d="M8 8l3 3" stroke="#d0a020" stroke-width="1.3"/></svg>
<svg class="a" style="left:825px;top:136px" width="12" height="11"><circle cx="3.5" cy="3" r="2.5" fill="#f0e060" stroke="#a09020" stroke-width=".7"/><rect x="5" y="5" width="5" height="5" fill="#f0e060" stroke="#a09020" stroke-width=".7"/><path d="M1 6v4h3" stroke="#3a70c0" fill="none"/></svg>
<svg class="a" style="left:841px;top:137px" width="10" height="9"><path d="M0 5h5M3 3l2 2-2 2" stroke="#3a70c0" fill="none" stroke-width="1"/><path d="M6 1h4M8 1v8M6 9h4" stroke="#444" stroke-width="1.2"/></svg>
<svg class="a" style="left:854px;top:136px" width="11" height="11"><rect x=".5" y=".5" width="10" height="9" fill="#e8f0fa" stroke="#2a4a90" stroke-width="1"/><rect x="1" y="1" width="9" height="2" fill="#3a60c0"/><circle cx="3" cy="8" r="1.5" fill="#20a040"/><circle cx="6" cy="8" r="1.5" fill="#e03030"/><path d="M4 7l5-4" stroke="#222" stroke-width=".8"/></svg>
<svg class="a" style="left:869px;top:136px" width="11" height="11"><rect x=".5" y=".5" width="10" height="9" fill="#e8f0e8" stroke="#3a7a3a" stroke-width="1"/><circle cx="6" cy="5" r="3" fill="#d040d0"/><path d="M3 5h4" stroke="#fff"/></svg>

<div class="a" style="left:714px;top:135px;width:1px;height:12px;background:#999"></div>
<div class="a" style="left:772px;top:135px;width:1px;height:12px;background:#999"></div>
<div class="a" style="left:820px;top:135px;width:1px;height:12px;background:#999"></div>
<div class="a" style="left:884px;top:135px;width:1px;height:12px;background:#999"></div>
<div class="a" style="left:1045px;top:135px;width:1px;height:12px;background:#999"></div>
<div class="a" style="left:888px;top:135px;width:140px;height:12px;background:#d9d9d9;border:1px solid #555"></div>
<div class="t" style="left:890px;top:136px;color:#111">StockItem</div>
<svg class="a" style="left:1031px;top:135px" width="12" height="12"><rect x="1" y="1" width="7" height="7" fill="#c0d0f0" stroke="#3a60a0" stroke-width=".7"/><rect x="2" y="2" width="5" height="1.5" fill="#e03030"/><path d="M5 9h4V7l3 2.5-3 2.5v-2H5z" fill="#f0d020" stroke="#806010" stroke-width=".5"/></svg>
<div class="a" style="left:1050px;top:135px;width:212px;height:12px;background:#d9d9d9;border:1px solid #555"></div>
<div class="t" style="left:1052px;top:136px;color:#111">Author</div>
<svg class="a" style="left:1265px;top:135px" width="13" height="12"><path d="M1 7l4-4 3 3-4 4z" fill="#e070e0"/><path d="M7 3l3-2 2 2-3 3z" fill="#4080e0"/><path d="M4 8h5V6l3 2.5-3 2.5V9H4z" fill="#f0d020" stroke="#806010" stroke-width=".5"/></svg>
<div class="a" style="left:657px;top:149px;width:164px;height:553px;background:#d4d4d4;border-top:1px solid #9a9a9a"></div>
<svg class="a" style="left:662px;top:153px" width="7" height="7"><path d="M6 0v6H0z" fill="#222"/></svg>
<svg class="a" style="left:678px;top:151px" width="9" height="12"><rect x=".5" y=".5" width="8" height="11" fill="#e8f0ff" stroke="#5a80c0" stroke-width=".8"/><path d="M.5 3.5h8M.5 7h8" stroke="#5a80c0" stroke-width=".8"/><rect x="1.5" y="8" width="6" height="3" fill="#f0c080"/></svg>
<div class="t" style="left:690px;top:151px;letter-spacing:-0.15px;color:#111">StockItem</div>
<svg class="a" style="left:696px;top:166.0px" width="7" height="8"><path d="M3.5 .5L6.5 4 3.5 7.5 .5 4z" fill="#4a8ae0" stroke="#2a5ab0" stroke-width=".6"/><path d="M3.5 1.5L5.5 4 3.5 5z" fill="#bcd8ff"/></svg>
<div class="t" style="left:706px;top:164.0px;letter-spacing:-0.15px;color:#111">Author</div>
<svg class="a" style="left:696px;top:179.33px" width="7" height="8"><path d="M3.5 .5L6.5 4 3.5 7.5 .5 4z" fill="#4a8ae0" stroke="#2a5ab0" stroke-width=".6"/><path d="M3.5 1.5L5.5 4 3.5 5z" fill="#bcd8ff"/></svg>
<div class="t" style="left:706px;top:177.33px;letter-spacing:-0.15px;color:#111">catalogNumber</div>
<svg class="a" style="left:696px;top:192.66000000000003px" width="7" height="8"><path d="M3.5 .5L6.5 4 3.5 7.5 .5 4z" fill="#4a8ae0" stroke="#2a5ab0" stroke-width=".6"/><path d="M3.5 1.5L5.5 4 3.5 5z" fill="#bcd8ff"/></svg>
<div class="t" style="left:706px;top:190.66000000000003px;letter-spacing:-0.15px;color:#111">costPrice</div>
<svg class="a" style="left:696px;top:205.99000000000004px" width="7" height="8"><path d="M3.5 .5L6.5 4 3.5 7.5 .5 4z" fill="#4a8ae0" stroke="#2a5ab0" stroke-width=".6"/><path d="M3.5 1.5L5.5 4 3.5 5z" fill="#bcd8ff"/></svg>
<div class="t" style="left:706px;top:203.99000000000004px;letter-spacing:-0.15px;color:#111">listPrice</div>
<svg class="a" style="left:696px;top:219.32000000000005px" width="7" height="8"><path d="M3.5 .5L6.5 4 3.5 7.5 .5 4z" fill="#4a8ae0" stroke="#2a5ab0" stroke-width=".6"/><path d="M3.5 1.5L5.5 4 3.5 5z" fill="#bcd8ff"/></svg>
<div class="t" style="left:706px;top:217.32000000000005px;letter-spacing:-0.15px;color:#111">title</div>
<svg class="a" style="left:692px;top:232.65000000000006px" width="11" height="8"><path d="M0 3h3M0 5h3" stroke="#999" stroke-width=".7"/><path d="M6.5 .5L10 4 6.5 7.5 3 4z" fill="#c040d0" stroke="#802090" stroke-width=".6"/></svg>
<div class="t" style="left:706px;top:230.65000000000006px;letter-spacing:-0.15px;color:#111">&#171;property&#187; Author()</div>
<svg class="a" style="left:692px;top:245.98000000000008px" width="11" height="8"><path d="M0 3h3M0 5h3" stroke="#999" stroke-width=".7"/><path d="M6.5 .5L10 4 6.5 7.5 3 4z" fill="#c040d0" stroke="#802090" stroke-width=".6"/></svg>
<div class="t" style="left:706px;top:243.98000000000008px;letter-spacing:-0.15px;color:#111">StockItem()</div>
<svg class="a" style="left:692px;top:259.31000000000006px" width="11" height="8"><path d="M0 3h3M0 5h3" stroke="#999" stroke-width=".7"/><path d="M6.5 .5L10 4 6.5 7.5 3 4z" fill="#c040d0" stroke="#802090" stroke-width=".6"/></svg>
<div class="t" style="left:706px;top:257.31000000000006px;letter-spacing:-0.15px;color:#111">&#171;property&#187; catalogNumber()</div>
<svg class="a" style="left:692px;top:272.64000000000004px" width="11" height="8"><path d="M0 3h3M0 5h3" stroke="#999" stroke-width=".7"/><path d="M6.5 .5L10 4 6.5 7.5 3 4z" fill="#c040d0" stroke="#802090" stroke-width=".6"/></svg>
<div class="t" style="left:706px;top:270.64000000000004px;letter-spacing:-0.15px;color:#111">&#171;property&#187; costPrice()</div>
<svg class="a" style="left:692px;top:285.97px" width="11" height="8"><path d="M0 3h3M0 5h3" stroke="#999" stroke-width=".7"/><path d="M6.5 .5L10 4 6.5 7.5 3 4z" fill="#c040d0" stroke="#802090" stroke-width=".6"/></svg>
<div class="t" style="left:706px;top:283.97px;letter-spacing:-0.15px;color:#111">&#171;property&#187; listPrice()</div>
<svg class="a" style="left:692px;top:299.3px" width="11" height="8"><path d="M0 3h3M0 5h3" stroke="#999" stroke-width=".7"/><path d="M6.5 .5L10 4 6.5 7.5 3 4z" fill="#c040d0" stroke="#802090" stroke-width=".6"/></svg>
<div class="t" style="left:706px;top:297.3px;letter-spacing:-0.15px;color:#111">&#171;property&#187; title()</div>
<svg class="a" style="left:692px;top:312.63px" width="11" height="8"><path d="M0 3h3M0 5h3" stroke="#999" stroke-width=".7"/><path d="M6.5 .5L10 4 6.5 7.5 3 4z" fill="#c040d0" stroke="#802090" stroke-width=".6"/></svg>
<div class="t" style="left:706px;top:310.63px;letter-spacing:-0.15px;color:#111">~StockItem()</div>
<div class="a" style="left:821px;top:149px;width:7px;height:553px;background:#aeaeae;border-left:1px solid #e6e6e6;border-right:2px solid #8e8e8e"></div>
<div class="a" style="left:822px;top:149px;width:1px;height:553px;background:#707070"></div>
<svg class="a" style="left:824px;top:422px" width="3" height="8"><path d="M1 1v1M1 3.5v1M1 6v1" stroke="#333" stroke-width="1"/></svg>
<div class="a" style="left:828px;top:149px;width:442px;height:542px;background:#fff;overflow:hidden">
<div class="a" style="left:1px;top:0;width:9px;height:542px;background:#efefef"></div>
<div class="a mono" style="left:10px;top:2.90px;width:28px;text-align:right;font-size:8.5px;line-height:11px;color:#12805e;-webkit-text-stroke:0.1px currentColor;transform:scaleX(0.915);transform-origin:100% 0">1</div>
<div class="a mono" style="left:41px;top:2.90px;font-size:8.5px;line-height:11px;color:#111;-webkit-text-stroke:0.1px currentColor;transform:scaleX(0.915);transform-origin:0 0"><span style="color:#008000">///////////////////////////////////////////////////////////</span></div>
<div class="a mono" style="left:10px;top:13.56px;width:28px;text-align:right;font-size:8.5px;line-height:11px;color:#12805e;-webkit-text-stroke:0.1px currentColor;transform:scaleX(0.915);transform-origin:100% 0">2</div>
<div class="a mono" style="left:41px;top:13.56px;font-size:8.5px;line-height:11px;color:#111;-webkit-text-stroke:0.1px currentColor;transform:scaleX(0.915);transform-origin:0 0"><span style="color:#008000">//  StockItem.cs</span></div>
<div class="a mono" style="left:10px;top:24.22px;width:28px;text-align:right;font-size:8.5px;line-height:11px;color:#12805e;-webkit-text-stroke:0.1px currentColor;transform:scaleX(0.915);transform-origin:100% 0">3</div>
<div class="a mono" style="left:41px;top:24.22px;font-size:8.5px;line-height:11px;color:#111;-webkit-text-stroke:0.1px currentColor;transform:scaleX(0.915);transform-origin:0 0"><span style="color:#008000">//  Implementation of the Class StockItem</span></div>
<div class="a mono" style="left:10px;top:34.88px;width:28px;text-align:right;font-size:8.5px;line-height:11px;color:#12805e;-webkit-text-stroke:0.1px currentColor;transform:scaleX(0.915);transform-origin:100% 0">4</div>
<div class="a mono" style="left:41px;top:34.88px;font-size:8.5px;line-height:11px;color:#111;-webkit-text-stroke:0.1px currentColor;transform:scaleX(0.915);transform-origin:0 0"><span style="color:#008000">//  Generated by Enterprise Architect</span></div>
<div class="a mono" style="left:10px;top:45.54px;width:28px;text-align:right;font-size:8.5px;line-height:11px;color:#12805e;-webkit-text-stroke:0.1px currentColor;transform:scaleX(0.915);transform-origin:100% 0">5</div>
<div class="a mono" style="left:41px;top:45.54px;font-size:8.5px;line-height:11px;color:#111;-webkit-text-stroke:0.1px currentColor;transform:scaleX(0.915);transform-origin:0 0"><span style="color:#008000">//  Created on:      08-Sep-2016 1:37:54 PM</span></div>
<div class="a mono" style="left:10px;top:56.20px;width:28px;text-align:right;font-size:8.5px;line-height:11px;color:#12805e;-webkit-text-stroke:0.1px currentColor;transform:scaleX(0.915);transform-origin:100% 0">6</div>
<div class="a mono" style="left:41px;top:56.20px;font-size:8.5px;line-height:11px;color:#111;-webkit-text-stroke:0.1px currentColor;transform:scaleX(0.915);transform-origin:0 0"><span style="color:#008000">//  Original author: Paulene Dean</span></div>
<div class="a mono" style="left:10px;top:66.86px;width:28px;text-align:right;font-size:8.5px;line-height:11px;color:#12805e;-webkit-text-stroke:0.1px currentColor;transform:scaleX(0.915);transform-origin:100% 0">7</div>
<div class="a mono" style="left:41px;top:66.86px;font-size:8.5px;line-height:11px;color:#111;-webkit-text-stroke:0.1px currentColor;transform:scaleX(0.915);transform-origin:0 0"><span style="color:#008000">///////////////////////////////////////////////////////////</span></div>
<div class="a mono" style="left:10px;top:77.52px;width:28px;text-align:right;font-size:8.5px;line-height:11px;color:#12805e;-webkit-text-stroke:0.1px currentColor;transform:scaleX(0.915);transform-origin:100% 0">8</div>
<div class="a mono" style="left:41px;top:77.52px;font-size:8.5px;line-height:11px;color:#111;-webkit-text-stroke:0.1px currentColor;transform:scaleX(0.915);transform-origin:0 0"></div>
<div class="a mono" style="left:10px;top:88.18px;width:28px;text-align:right;font-size:8.5px;line-height:11px;color:#12805e;-webkit-text-stroke:0.1px currentColor;transform:scaleX(0.915);transform-origin:100% 0">9</div>
<div class="a mono" style="left:41px;top:88.18px;font-size:8.5px;line-height:11px;color:#111;-webkit-text-stroke:0.1px currentColor;transform:scaleX(0.915);transform-origin:0 0"><span style="color:#0000ff">using</span> System;</div>
<div class="a mono" style="left:10px;top:98.84px;width:28px;text-align:right;font-size:8.5px;line-height:11px;color:#12805e;-webkit-text-stroke:0.1px currentColor;transform:scaleX(0.915);transform-origin:100% 0">10</div>
<div class="a mono" style="left:41px;top:98.84px;font-size:8.5px;line-height:11px;color:#111;-webkit-text-stroke:0.1px currentColor;transform:scaleX(0.915);transform-origin:0 0"><span style="color:#0000ff">using</span> System.Collections.Generic;</div>
<div class="a mono" style="left:10px;top:109.50px;width:28px;text-align:right;font-size:8.5px;line-height:11px;color:#12805e;-webkit-text-stroke:0.1px currentColor;transform:scaleX(0.915);transform-origin:100% 0">11</div>
<div class="a mono" style="left:41px;top:109.50px;font-size:8.5px;line-height:11px;color:#111;-webkit-text-stroke:0.1px currentColor;transform:scaleX(0.915);transform-origin:0 0"><span style="color:#0000ff">using</span> System.Text;</div>
<div class="a mono" style="left:10px;top:120.16px;width:28px;text-align:right;font-size:8.5px;line-height:11px;color:#12805e;-webkit-text-stroke:0.1px currentColor;transform:scaleX(0.915);transform-origin:100% 0">12</div>
<div class="a mono" style="left:41px;top:120.16px;font-size:8.5px;line-height:11px;color:#111;-webkit-text-stroke:0.1px currentColor;transform:scaleX(0.915);transform-origin:0 0"><span style="color:#0000ff">using</span> System.IO;</div>
<div class="a mono" style="left:10px;top:130.82px;width:28px;text-align:right;font-size:8.5px;line-height:11px;color:#12805e;-webkit-text-stroke:0.1px currentColor;transform:scaleX(0.915);transform-origin:100% 0">13</div>
<div class="a mono" style="left:41px;top:130.82px;font-size:8.5px;line-height:11px;color:#111;-webkit-text-stroke:0.1px currentColor;transform:scaleX(0.915);transform-origin:0 0"></div>
<div class="a mono" style="left:10px;top:141.48px;width:28px;text-align:right;font-size:8.5px;line-height:11px;color:#12805e;-webkit-text-stroke:0.1px currentColor;transform:scaleX(0.915);transform-origin:100% 0">14</div>
<div class="a mono" style="left:41px;top:141.48px;font-size:8.5px;line-height:11px;color:#111;-webkit-text-stroke:0.1px currentColor;transform:scaleX(0.915);transform-origin:0 0"></div>
<div class="a mono" style="left:10px;top:152.14px;width:28px;text-align:right;font-size:8.5px;line-height:11px;color:#12805e;-webkit-text-stroke:0.1px currentColor;transform:scaleX(0.915);transform-origin:100% 0">15</div>
<div class="a mono" style="left:41px;top:152.14px;font-size:8.5px;line-height:11px;color:#111;-webkit-text-stroke:0.1px currentColor;transform:scaleX(0.915);transform-origin:0 0"></div>
<div class="a mono" style="left:10px;top:162.80px;width:28px;text-align:right;font-size:8.5px;line-height:11px;color:#12805e;-webkit-text-stroke:0.1px currentColor;transform:scaleX(0.915);transform-origin:100% 0">16</div>
<div class="a mono" style="left:41px;top:162.80px;font-size:8.5px;line-height:11px;color:#111;-webkit-text-stroke:0.1px currentColor;transform:scaleX(0.915);transform-origin:0 0"><span style="color:#008000">/// &lt;summary&gt;</span></div>
<div class="a mono" style="left:10px;top:173.46px;width:28px;text-align:right;font-size:8.5px;line-height:11px;color:#12805e;-webkit-text-stroke:0.1px currentColor;transform:scaleX(0.915);transform-origin:100% 0">17</div>
<div class="a mono" style="left:41px;top:173.46px;font-size:8.5px;line-height:11px;color:#111;-webkit-text-stroke:0.1px currentColor;transform:scaleX(0.915);transform-origin:0 0"><span style="color:#008000">/// These are some notes.</span></div>
<div class="a mono" style="left:10px;top:184.12px;width:28px;text-align:right;font-size:8.5px;line-height:11px;color:#12805e;-webkit-text-stroke:0.1px currentColor;transform:scaleX(0.915);transform-origin:100% 0">18</div>
<div class="a mono" style="left:41px;top:184.12px;font-size:8.5px;line-height:11px;color:#111;-webkit-text-stroke:0.1px currentColor;transform:scaleX(0.915);transform-origin:0 0"><span style="color:#008000">/// &lt;/summary&gt;</span></div>
<div class="a mono" style="left:10px;top:194.78px;width:28px;text-align:right;font-size:8.5px;line-height:11px;color:#12805e;-webkit-text-stroke:0.1px currentColor;transform:scaleX(0.915);transform-origin:100% 0">19</div>
<div class="a mono" style="left:41px;top:194.78px;font-size:8.5px;line-height:11px;color:#111;-webkit-text-stroke:0.1px currentColor;transform:scaleX(0.915);transform-origin:0 0"><span style="color:#0000ff">public</span> <span style="color:#0000ff">class</span> <span style="background:#d0d0d0">StockItem</span> {</div>
<div class="a mono" style="left:10px;top:205.44px;width:28px;text-align:right;font-size:8.5px;line-height:11px;color:#12805e;-webkit-text-stroke:0.1px currentColor;transform:scaleX(0.915);transform-origin:100% 0">20</div>
<div class="a mono" style="left:41px;top:205.44px;font-size:8.5px;line-height:11px;color:#111;-webkit-text-stroke:0.1px currentColor;transform:scaleX(0.915);transform-origin:0 0"></div>
<div class="a mono" style="left:10px;top:216.10px;width:28px;text-align:right;font-size:8.5px;line-height:11px;color:#12805e;-webkit-text-stroke:0.1px currentColor;transform:scaleX(0.915);transform-origin:100% 0">21</div>
<div class="a mono" style="left:41px;top:216.10px;font-size:8.5px;line-height:11px;color:#111;-webkit-text-stroke:0.1px currentColor;transform:scaleX(0.915);transform-origin:0 0">    <span style="color:#0000ff">private</span> <span style="color:#0000ff">string</span> Author;</div>
<div class="a mono" style="left:10px;top:226.76px;width:28px;text-align:right;font-size:8.5px;line-height:11px;color:#12805e;-webkit-text-stroke:0.1px currentColor;transform:scaleX(0.915);transform-origin:100% 0">22</div>
<div class="a mono" style="left:41px;top:226.76px;font-size:8.5px;line-height:11px;color:#111;-webkit-text-stroke:0.1px currentColor;transform:scaleX(0.915);transform-origin:0 0">    <span style="color:#0000ff">private</span> <span style="color:#0000ff">string</span> catalogNumber;</div>
<div class="a mono" style="left:10px;top:237.42px;width:28px;text-align:right;font-size:8.5px;line-height:11px;color:#12805e;-webkit-text-stroke:0.1px currentColor;transform:scaleX(0.915);transform-origin:100% 0">23</div>
<div class="a mono" style="left:41px;top:237.42px;font-size:8.5px;line-height:11px;color:#111;-webkit-text-stroke:0.1px currentColor;transform:scaleX(0.915);transform-origin:0 0">    <span style="color:#0000ff">private</span> number costPrice;</div>
<div class="a mono" style="left:10px;top:248.08px;width:28px;text-align:right;font-size:8.5px;line-height:11px;color:#12805e;-webkit-text-stroke:0.1px currentColor;transform:scaleX(0.915);transform-origin:100% 0">24</div>
<div class="a mono" style="left:41px;top:248.08px;font-size:8.5px;line-height:11px;color:#111;-webkit-text-stroke:0.1px currentColor;transform:scaleX(0.915);transform-origin:0 0">    <span style="color:#0000ff">private</span> number listPrice;</div>
<div class="a mono" style="left:10px;top:258.74px;width:28px;text-align:right;font-size:8.5px;line-height:11px;color:#12805e;-webkit-text-stroke:0.1px currentColor;transform:scaleX(0.915);transform-origin:100% 0">25</div>
<div class="a mono" style="left:41px;top:258.74px;font-size:8.5px;line-height:11px;color:#111;-webkit-text-stroke:0.1px currentColor;transform:scaleX(0.915);transform-origin:0 0">    <span style="color:#0000ff">private</span> <span style="color:#0000ff">string</span> title;</div>
<div class="a mono" style="left:10px;top:269.40px;width:28px;text-align:right;font-size:8.5px;line-height:11px;color:#12805e;-webkit-text-stroke:0.1px currentColor;transform:scaleX(0.915);transform-origin:100% 0">26</div>
<div class="a mono" style="left:41px;top:269.40px;font-size:8.5px;line-height:11px;color:#111;-webkit-text-stroke:0.1px currentColor;transform:scaleX(0.915);transform-origin:0 0"></div>
<div class="a mono" style="left:10px;top:280.06px;width:28px;text-align:right;font-size:8.5px;line-height:11px;color:#12805e;-webkit-text-stroke:0.1px currentColor;transform:scaleX(0.915);transform-origin:100% 0">27</div>
<div class="a mono" style="left:41px;top:280.06px;font-size:8.5px;line-height:11px;color:#111;-webkit-text-stroke:0.1px currentColor;transform:scaleX(0.915);transform-origin:0 0">    <span style="color:#0000ff">public</span> StockItem(){</div>
<div class="a mono" style="left:10px;top:290.72px;width:28px;text-align:right;font-size:8.5px;line-height:11px;color:#12805e;-webkit-text-stroke:0.1px currentColor;transform:scaleX(0.915);transform-origin:100% 0">28</div>
<div class="a mono" style="left:41px;top:290.72px;font-size:8.5px;line-height:11px;color:#111;-webkit-text-stroke:0.1px currentColor;transform:scaleX(0.915);transform-origin:0 0"></div>
<div class="a mono" style="left:10px;top:301.38px;width:28px;text-align:right;font-size:8.5px;line-height:11px;color:#12805e;-webkit-text-stroke:0.1px currentColor;transform:scaleX(0.915);transform-origin:100% 0">29</div>
<div class="a mono" style="left:41px;top:301.38px;font-size:8.5px;line-height:11px;color:#111;-webkit-text-stroke:0.1px currentColor;transform:scaleX(0.915);transform-origin:0 0">    }</div>
<div class="a mono" style="left:10px;top:312.04px;width:28px;text-align:right;font-size:8.5px;line-height:11px;color:#12805e;-webkit-text-stroke:0.1px currentColor;transform:scaleX(0.915);transform-origin:100% 0">30</div>
<div class="a mono" style="left:41px;top:312.04px;font-size:8.5px;line-height:11px;color:#111;-webkit-text-stroke:0.1px currentColor;transform:scaleX(0.915);transform-origin:0 0"></div>
<div class="a mono" style="left:10px;top:322.70px;width:28px;text-align:right;font-size:8.5px;line-height:11px;color:#12805e;-webkit-text-stroke:0.1px currentColor;transform:scaleX(0.915);transform-origin:100% 0">31</div>
<div class="a mono" style="left:41px;top:322.70px;font-size:8.5px;line-height:11px;color:#111;-webkit-text-stroke:0.1px currentColor;transform:scaleX(0.915);transform-origin:0 0">    ~StockItem(){</div>
<div class="a mono" style="left:10px;top:333.36px;width:28px;text-align:right;font-size:8.5px;line-height:11px;color:#12805e;-webkit-text-stroke:0.1px currentColor;transform:scaleX(0.915);transform-origin:100% 0">32</div>
<div class="a mono" style="left:41px;top:333.36px;font-size:8.5px;line-height:11px;color:#111;-webkit-text-stroke:0.1px currentColor;transform:scaleX(0.915);transform-origin:0 0"></div>
<div class="a mono" style="left:10px;top:344.02px;width:28px;text-align:right;font-size:8.5px;line-height:11px;color:#12805e;-webkit-text-stroke:0.1px currentColor;transform:scaleX(0.915);transform-origin:100% 0">33</div>
<div class="a mono" style="left:41px;top:344.02px;font-size:8.5px;line-height:11px;color:#111;-webkit-text-stroke:0.1px currentColor;transform:scaleX(0.915);transform-origin:0 0">    }</div>
<div class="a mono" style="left:10px;top:354.68px;width:28px;text-align:right;font-size:8.5px;line-height:11px;color:#12805e;-webkit-text-stroke:0.1px currentColor;transform:scaleX(0.915);transform-origin:100% 0">34</div>
<div class="a mono" style="left:41px;top:354.68px;font-size:8.5px;line-height:11px;color:#111;-webkit-text-stroke:0.1px currentColor;transform:scaleX(0.915);transform-origin:0 0"></div>
<div class="a mono" style="left:10px;top:365.34px;width:28px;text-align:right;font-size:8.5px;line-height:11px;color:#12805e;-webkit-text-stroke:0.1px currentColor;transform:scaleX(0.915);transform-origin:100% 0">35</div>
<div class="a mono" style="left:41px;top:365.34px;font-size:8.5px;line-height:11px;color:#111;-webkit-text-stroke:0.1px currentColor;transform:scaleX(0.915);transform-origin:0 0">    <span style="color:#0000ff">public</span> <span style="color:#0000ff">string</span> Author{</div>
<div class="a mono" style="left:10px;top:376.00px;width:28px;text-align:right;font-size:8.5px;line-height:11px;color:#12805e;-webkit-text-stroke:0.1px currentColor;transform:scaleX(0.915);transform-origin:100% 0">36</div>
<div class="a mono" style="left:41px;top:376.00px;font-size:8.5px;line-height:11px;color:#111;-webkit-text-stroke:0.1px currentColor;transform:scaleX(0.915);transform-origin:0 0">        get{</div>
<div class="a mono" style="left:10px;top:386.66px;width:28px;text-align:right;font-size:8.5px;line-height:11px;color:#12805e;-webkit-text-stroke:0.1px currentColor;transform:scaleX(0.915);transform-origin:100% 0">37</div>
<div class="a mono" style="left:41px;top:386.66px;font-size:8.5px;line-height:11px;color:#111;-webkit-text-stroke:0.1px currentColor;transform:scaleX(0.915);transform-origin:0 0">            <span style="color:#0000ff">return</span> Author;</div>
<div class="a mono" style="left:10px;top:397.32px;width:28px;text-align:right;font-size:8.5px;line-height:11px;color:#12805e;-webkit-text-stroke:0.1px currentColor;transform:scaleX(0.915);transform-origin:100% 0">38</div>
<div class="a mono" style="left:41px;top:397.32px;font-size:8.5px;line-height:11px;color:#111;-webkit-text-stroke:0.1px currentColor;transform:scaleX(0.915);transform-origin:0 0">        }</div>
<div class="a mono" style="left:10px;top:407.98px;width:28px;text-align:right;font-size:8.5px;line-height:11px;color:#12805e;-webkit-text-stroke:0.1px currentColor;transform:scaleX(0.915);transform-origin:100% 0">39</div>
<div class="a mono" style="left:41px;top:407.98px;font-size:8.5px;line-height:11px;color:#111;-webkit-text-stroke:0.1px currentColor;transform:scaleX(0.915);transform-origin:0 0">        set{</div>
<div class="a mono" style="left:10px;top:418.64px;width:28px;text-align:right;font-size:8.5px;line-height:11px;color:#12805e;-webkit-text-stroke:0.1px currentColor;transform:scaleX(0.915);transform-origin:100% 0">40</div>
<div class="a mono" style="left:41px;top:418.64px;font-size:8.5px;line-height:11px;color:#111;-webkit-text-stroke:0.1px currentColor;transform:scaleX(0.915);transform-origin:0 0">            Author = value;</div>
<div class="a mono" style="left:10px;top:429.30px;width:28px;text-align:right;font-size:8.5px;line-height:11px;color:#12805e;-webkit-text-stroke:0.1px currentColor;transform:scaleX(0.915);transform-origin:100% 0">41</div>
<div class="a mono" style="left:41px;top:429.30px;font-size:8.5px;line-height:11px;color:#111;-webkit-text-stroke:0.1px currentColor;transform:scaleX(0.915);transform-origin:0 0">        }</div>
<div class="a mono" style="left:10px;top:439.96px;width:28px;text-align:right;font-size:8.5px;line-height:11px;color:#12805e;-webkit-text-stroke:0.1px currentColor;transform:scaleX(0.915);transform-origin:100% 0">42</div>
<div class="a mono" style="left:41px;top:439.96px;font-size:8.5px;line-height:11px;color:#111;-webkit-text-stroke:0.1px currentColor;transform:scaleX(0.915);transform-origin:0 0">    }</div>
<div class="a mono" style="left:10px;top:450.62px;width:28px;text-align:right;font-size:8.5px;line-height:11px;color:#12805e;-webkit-text-stroke:0.1px currentColor;transform:scaleX(0.915);transform-origin:100% 0">43</div>
<div class="a mono" style="left:41px;top:450.62px;font-size:8.5px;line-height:11px;color:#111;-webkit-text-stroke:0.1px currentColor;transform:scaleX(0.915);transform-origin:0 0"></div>
<div class="a mono" style="left:10px;top:461.28px;width:28px;text-align:right;font-size:8.5px;line-height:11px;color:#12805e;-webkit-text-stroke:0.1px currentColor;transform:scaleX(0.915);transform-origin:100% 0">44</div>
<div class="a mono" style="left:41px;top:461.28px;font-size:8.5px;line-height:11px;color:#111;-webkit-text-stroke:0.1px currentColor;transform:scaleX(0.915);transform-origin:0 0">    <span style="color:#0000ff">public</span> <span style="color:#0000ff">string</span> catalogNumber{</div>
<div class="a mono" style="left:10px;top:471.94px;width:28px;text-align:right;font-size:8.5px;line-height:11px;color:#12805e;-webkit-text-stroke:0.1px currentColor;transform:scaleX(0.915);transform-origin:100% 0">45</div>
<div class="a mono" style="left:41px;top:471.94px;font-size:8.5px;line-height:11px;color:#111;-webkit-text-stroke:0.1px currentColor;transform:scaleX(0.915);transform-origin:0 0">        get{</div>
<div class="a mono" style="left:10px;top:482.60px;width:28px;text-align:right;font-size:8.5px;line-height:11px;color:#12805e;-webkit-text-stroke:0.1px currentColor;transform:scaleX(0.915);transform-origin:100% 0">46</div>
<div class="a mono" style="left:41px;top:482.60px;font-size:8.5px;line-height:11px;color:#111;-webkit-text-stroke:0.1px currentColor;transform:scaleX(0.915);transform-origin:0 0">            <span style="color:#0000ff">return</span> catalogNumber;</div>
<div class="a mono" style="left:10px;top:493.26px;width:28px;text-align:right;font-size:8.5px;line-height:11px;color:#12805e;-webkit-text-stroke:0.1px currentColor;transform:scaleX(0.915);transform-origin:100% 0">47</div>
<div class="a mono" style="left:41px;top:493.26px;font-size:8.5px;line-height:11px;color:#111;-webkit-text-stroke:0.1px currentColor;transform:scaleX(0.915);transform-origin:0 0">        }</div>
<div class="a mono" style="left:10px;top:503.92px;width:28px;text-align:right;font-size:8.5px;line-height:11px;color:#12805e;-webkit-text-stroke:0.1px currentColor;transform:scaleX(0.915);transform-origin:100% 0">48</div>
<div class="a mono" style="left:41px;top:503.92px;font-size:8.5px;line-height:11px;color:#111;-webkit-text-stroke:0.1px currentColor;transform:scaleX(0.915);transform-origin:0 0">        set{</div>
<div class="a mono" style="left:10px;top:514.58px;width:28px;text-align:right;font-size:8.5px;line-height:11px;color:#12805e;-webkit-text-stroke:0.1px currentColor;transform:scaleX(0.915);transform-origin:100% 0">49</div>
<div class="a mono" style="left:41px;top:514.58px;font-size:8.5px;line-height:11px;color:#111;-webkit-text-stroke:0.1px currentColor;transform:scaleX(0.915);transform-origin:0 0">            catalogNumber = value;</div>
<div class="a mono" style="left:10px;top:525.24px;width:28px;text-align:right;font-size:8.5px;line-height:11px;color:#12805e;-webkit-text-stroke:0.1px currentColor;transform:scaleX(0.915);transform-origin:100% 0">50</div>
<div class="a mono" style="left:41px;top:525.24px;font-size:8.5px;line-height:11px;color:#111;-webkit-text-stroke:0.1px currentColor;transform:scaleX(0.915);transform-origin:0 0">        }</div>
<div class="a mono" style="left:10px;top:535.90px;width:28px;text-align:right;font-size:8.5px;line-height:11px;color:#12805e;-webkit-text-stroke:0.1px currentColor;transform:scaleX(0.915);transform-origin:100% 0">51</div>
<div class="a mono" style="left:41px;top:535.90px;font-size:8.5px;line-height:11px;color:#111;-webkit-text-stroke:0.1px currentColor;transform:scaleX(0.915);transform-origin:0 0">    }</div>
<div class="a" style="left:60px;top:375.3px;width:1px;height:74.6px;background:#e0e0e0"></div>
<div class="a" style="left:60px;top:471.2px;width:1px;height:74.6px;background:#e0e0e0"></div>
<div class="a" style="left:78.5px;top:386.0px;width:1px;height:10.7px;background:#e8e8e8"></div>
<div class="a" style="left:78.5px;top:417.9px;width:1px;height:10.7px;background:#e8e8e8"></div>
<div class="a" style="left:78.5px;top:481.9px;width:1px;height:10.7px;background:#e8e8e8"></div>
<div class="a" style="left:78.5px;top:513.9px;width:1px;height:10.7px;background:#e8e8e8"></div>
</div>
<div class="a" style="left:1270px;top:149px;width:10px;height:542px;background:#6e6e6e"></div>
<div class="a" style="left:1270px;top:149px;width:10px;height:11px;background:#9a9a9a"></div>
<svg class="a" style="left:1272px;top:153px" width="6" height="4"><path d="M0 4h6L3 0z" fill="#111"/></svg>
<div class="a" style="left:1270px;top:160px;width:10px;height:204px;background:#9c9c9c"></div>
<div class="a" style="left:1270px;top:680px;width:10px;height:11px;background:#9a9a9a"></div>
<svg class="a" style="left:1272px;top:684px" width="6" height="4"><path d="M0 0h6L3 4z" fill="#111"/></svg>
<div class="a" style="left:828px;top:691px;width:452px;height:11px;background:#6e6e6e"></div>
<div class="a" style="left:839px;top:691px;width:128px;height:11px;background:#9c9c9c"></div>
<div class="a" style="left:828px;top:691px;width:10px;height:11px;background:#9a9a9a"></div>
<svg class="a" style="left:831px;top:693px" width="4" height="7"><path d="M4 0v7L0 3.5z" fill="#111"/></svg>
<div class="a" style="left:1259px;top:691px;width:10px;height:11px;background:#9a9a9a"></div>
<svg class="a" style="left:1262px;top:693px" width="4" height="7"><path d="M0 0v7l4-3.5z" fill="#111"/></svg>
<div class="a" style="left:1270px;top:691px;width:10px;height:11px;background:#c8c8c8"></div><!--/RIGHT-->
  <!--MENU--><div class="a" style="left:149px;top:0;width:183px;height:21px;background:#fff;border:1px solid #d8d8d8"></div>
<div class="a" style="left:152px;top:1px;width:177px;height:18px;background:#f0f0f0"></div>
<svg class="a" style="left:152px;top:1px" width="180" height="19">
<path d="M4 13L7.5 5L11 13M5.5 10h4" stroke="#10208a" stroke-width="1.6" fill="none"/>
<path d="M19 9L21 3L23 9M19.8 7h2.4" stroke="#111" stroke-width="1" fill="none"/><rect x="23" y="2" width="2.5" height="2.5" fill="#e040c0"/><rect x="26" y="3" width="2.5" height="2.5" fill="#20c0e0"/><rect x="24" y="5" width="2.5" height="2.5" fill="#f0e020"/>
<rect x="18" y="12" width="12" height="3" fill="#000"/>
<path d="M33 8.5h4l-2 2z" fill="#222"/>
<path d="M44 4l4-2 4 4-4 2z" fill="#fff" stroke="#10208a" stroke-width="1"/><path d="M48 7h4v2h-4z" fill="#10208a"/>
<rect x="42" y="12" width="12" height="3" fill="#fafafa"/>
<path d="M57 8.5h4l-2 2z" fill="#222"/>
<path d="M65 8L75 2" stroke="#6030a0" stroke-width="1"/><rect x="64" y="8" width="2.5" height="2.5" fill="#e040c0"/><rect x="67" y="8" width="2.5" height="2.5" fill="#20c0e0"/><rect x="71" y="8" width="2.5" height="2.5" fill="#f0e020"/>
<rect x="64" y="11" width="12" height="4" fill="#000"/>
<path d="M79 8.5h4l-2 2z" fill="#222"/>
<rect x="85.5" y="2.5" width="26" height="13" fill="#d4d4d4" stroke="#555" stroke-width="1"/>
<path d="M104 6.5h4l-2-2zM104 11h4l-2 2z" fill="#222"/>
<path d="M115 13l4-6 4 3-4 5z" fill="#f0d020" stroke="#807010" stroke-width=".6"/><path d="M121 8l5-5 2 2-5 5z" fill="#3050c0"/><path d="M114 15h6" stroke="#f0e020" stroke-width="1.5"/>
<path d="M131 14l3-1 7-7-2-2-7 7z" fill="#4090e0" stroke="#10208a" stroke-width=".7"/><path d="M138 3l2-1 2 2-1 2z" fill="#10208a"/>
<circle cx="147" cy="10" r="2.6" fill="none" stroke="#10208a" stroke-width="1.2"/><circle cx="152" cy="10" r="2.6" fill="none" stroke="#10208a" stroke-width="1.2"/><path d="M154 7q2-3 4-2" stroke="#10208a" fill="none"/>
<path d="M157 8.5h4l-2 2z" fill="#222"/>
<circle cx="171" cy="9.5" r="5" fill="none" stroke="#5050d0" stroke-width="1"/><circle cx="171" cy="9.5" r="3.2" fill="none" stroke="#5050d0" stroke-width="1"/><circle cx="171" cy="9.5" r="1.4" fill="none" stroke="#5050d0" stroke-width="1"/>
</svg>
<div class="a" style="left:240px;top:4px;font-size:9px;line-height:11px;color:#111">1</div>
<div class="a" style="left:152px;top:30px;width:201px;height:402px;background:#f0f0f0;border:1px solid #fcfcfc;box-shadow:1px 1px 2px rgba(0,0,0,.45)"></div>
<div class="t" style="left:172.5px;top:33.0px;color:#1a1a1a">Extensions</div>
<svg class="a" style="left:345px;top:36.0px" width="4" height="6"><path d="M0 0v6l3.5-3z" fill="#111"/></svg>
<div class="a" style="left:172px;top:48px;width:177px;height:1px;background:#e2e2e2;border-bottom:1px solid #f8f8f8"></div>
<div class="t" style="left:172.5px;top:52.5px;color:#1a1a1a">Properties...</div>
<div class="t" style="left:301px;top:52.5px;color:#1a1a1a">Alt+Enter</div>
<div class="t" style="left:172.5px;top:67.5px;color:#1a1a1a">Properties Page</div>
<svg class="a" style="left:345px;top:70.5px" width="4" height="6"><path d="M0 0v6l3.5-3z" fill="#111"/></svg>
<div class="t" style="left:172.5px;top:82.0px;color:#1a1a1a">Advanced</div>
<svg class="a" style="left:345px;top:85.0px" width="4" height="6"><path d="M0 0v6l3.5-3z" fill="#111"/></svg>
<div class="a" style="left:172px;top:98px;width:177px;height:1px;background:#e2e2e2;border-bottom:1px solid #f8f8f8"></div>
<div class="t" style="left:172.5px;top:102.0px;color:#1a1a1a">New Child Element</div>
<svg class="a" style="left:345px;top:105.0px" width="4" height="6"><path d="M0 0v6l3.5-3z" fill="#111"/></svg>
<div class="t" style="left:172.5px;top:116.5px;color:#1a1a1a">New Child Diagram</div>
<svg class="a" style="left:345px;top:119.5px" width="4" height="6"><path d="M0 0v6l3.5-3z" fill="#111"/></svg>
<div class="t" style="left:172.5px;top:131.5px;color:#1a1a1a">Features &amp; Properties</div>
<svg class="a" style="left:345px;top:134.5px" width="4" height="6"><path d="M0 0v6l3.5-3z" fill="#111"/></svg>
<div class="t" style="left:172.5px;top:146.0px;color:#1a1a1a">Structural Elements...</div>
<div class="a" style="left:172px;top:162px;width:177px;height:1px;background:#e2e2e2;border-bottom:1px solid #f8f8f8"></div>
<div class="t" style="left:172.5px;top:166.0px;color:#1a1a1a">Insert Related Elements...</div>
<div class="t" style="left:172.5px;top:180.5px;color:#a0a0a0">Clone Element as New Version...</div>
<div class="a" style="left:172px;top:196px;width:177px;height:1px;background:#e2e2e2;border-bottom:1px solid #f8f8f8"></div>
<div class="t" style="left:172.5px;top:200.5px;color:#1a1a1a">Create Linked Document</div>
<div class="t" style="left:301px;top:200.5px;color:#1a1a1a">Ctrl+Alt+D</div>
<div class="t" style="left:172.5px;top:215.5px;color:#1a1a1a">Load in Schema Composer</div>
<div class="t" style="left:172.5px;top:230.0px;color:#1a1a1a">Generate Documentation</div>
<div class="a" style="left:172px;top:246px;width:177px;height:1px;background:#e2e2e2;border-bottom:1px solid #f8f8f8"></div>
<div class="t" style="left:172.5px;top:250.0px;color:#1a1a1a">Find</div>
<svg class="a" style="left:345px;top:253.0px" width="4" height="6"><path d="M0 0v6l3.5-3z" fill="#111"/></svg>
<div class="t" style="left:172.5px;top:264.5px;color:#1a1a1a">Appearance</div>
<svg class="a" style="left:345px;top:267.5px" width="4" height="6"><path d="M0 0v6l3.5-3z" fill="#111"/></svg>
<div class="t" style="left:172.5px;top:279.0px;color:#1a1a1a">Info view</div>
<svg class="a" style="left:345px;top:282.0px" width="4" height="6"><path d="M0 0v6l3.5-3z" fill="#111"/></svg>
<div class="a" style="left:172px;top:294px;width:177px;height:1px;background:#e2e2e2;border-bottom:1px solid #f8f8f8"></div>
<div class="a" style="left:154px;top:298px;width:197px;height:14px;background:#c6c6c6"></div>
<div class="t" style="left:172.5px;top:299.5px;color:#1a1a1a">Code Engineering</div>
<svg class="a" style="left:345px;top:302.5px" width="4" height="6"><path d="M0 0v6l3.5-3z" fill="#111"/></svg>
<div class="a" style="left:172px;top:315px;width:177px;height:1px;background:#e2e2e2;border-bottom:1px solid #f8f8f8"></div>
<div class="t" style="left:172.5px;top:319.5px;color:#1a1a1a">Lock Element...</div>
<div class="t" style="left:172.5px;top:334.0px;color:#1a1a1a">Selectable</div>
<svg class="a" style="left:158px;top:336.0px" width="8" height="7"><path d="M1.5 3.8l1.8 1.8L6.5 1.5" stroke="#555" stroke-width=".9" fill="none"/></svg>
<div class="t" style="left:172.5px;top:348.5px;color:#1a1a1a">Printable</div>
<svg class="a" style="left:158px;top:350.5px" width="8" height="7"><path d="M1.5 3.8l1.8 1.8L6.5 1.5" stroke="#555" stroke-width=".9" fill="none"/></svg>
<div class="t" style="left:172.5px;top:363.0px;color:#1a1a1a">Dockable</div>
<div class="t" style="left:172.5px;top:378.0px;color:#1a1a1a">Z-Order</div>
<svg class="a" style="left:345px;top:381.0px" width="4" height="6"><path d="M0 0v6l3.5-3z" fill="#111"/></svg>
<div class="a" style="left:172px;top:394px;width:177px;height:1px;background:#e2e2e2;border-bottom:1px solid #f8f8f8"></div>
<div class="t" style="left:172.5px;top:398.0px;color:#1a1a1a">UML Help</div>
<div class="a" style="left:172px;top:414px;width:177px;height:1px;background:#e2e2e2;border-bottom:1px solid #f8f8f8"></div>
<div class="t" style="left:172.5px;top:418.0px;color:#1a1a1a">Delete 'Transaction'</div>
<div class="t" style="left:301px;top:418.0px;color:#1a1a1a">Ctrl+D</div>
<div class="a" style="left:353px;top:296.5px;width:151px;height:65.5px;background:#f0f0f0;border:1px solid #fcfcfc;box-shadow:1px 1px 2px rgba(0,0,0,.45)"></div>
<div class="a" style="left:355px;top:327px;width:147px;height:14px;background:#c6c6c6"></div>
<div class="a" style="left:373px;top:347px;width:127px;height:1px;background:#dcdcdc"></div>
<div class="t" style="left:373px;top:300px;color:#1a1a1a">Generate Code...</div>
<div class="t" style="left:478px;top:300px;color:#1a1a1a">F11</div>
<div class="t" style="left:373px;top:314.5px;color:#1a1a1a">Synchronize with Code ...</div>
<div class="t" style="left:478px;top:314.5px;color:#1a1a1a">F7</div>
<div class="t" style="left:373px;top:329.5px;color:#1a1a1a">View Source Code...</div>
<div class="t" style="left:478px;top:329.5px;color:#1a1a1a">F12</div>
<div class="t" style="left:373px;top:349px;color:#1a1a1a">Execution Analyzer</div>
<svg class="a" style="left:496px;top:351.5px" width="4" height="6"><path d="M0 0v6l3.5-3z" fill="#111"/></svg>
<svg class="a" style="left:356px;top:299px" width="12" height="12"><rect x=".5" y=".5" width="7" height="7" fill="#fff" stroke="#777" stroke-width=".8"/><rect x="2" y="3" width="3" height="1.2" fill="#e03030"/><rect x="4.5" y="4.5" width="7" height="7" fill="#fff" stroke="#777" stroke-width=".8"/><rect x="8" y="8.5" width="2" height="1.5" fill="#e03030"/></svg>
<svg class="a" style="left:356px;top:313px" width="12" height="12"><rect x=".5" y=".5" width="7" height="7" fill="#fff" stroke="#777" stroke-width=".8"/><rect x="4" y="4" width="7" height="7" fill="#fff" stroke="#777" stroke-width=".8"/><path d="M6 9l3-3" stroke="#e03030" stroke-width="1"/><rect x="2" y="10" width="4" height="1.5" fill="#333"/></svg><!--/MENU-->
  <!-- status bar -->
  <div class="a" style="left:0;top:703px;width:1280px;height:16px;background:#595959"></div>
  <div class="t" style="left:3px;top:706px;color:#e8e8e8">View Source Code... F12 : View and edit current element's related source code in the default editor</div>
<div class="a" style="left:1069px;top:711px;width:5px;height:1px;background:#a0a0a0"></div>
<div class="a" style="left:1081px;top:711px;width:58px;height:1px;background:#a0a0a0"></div>
<div class="a" style="left:1090px;top:707px;width:3px;height:8px;background:#d8d8d8;border:1px solid #888"></div>
<div class="a" style="left:1146px;top:711px;width:6px;height:1px;background:#a0a0a0"></div>
<div class="a" style="left:1148.5px;top:708.5px;width:1px;height:6px;background:#a0a0a0"></div>
<div class="t" style="left:1161px;top:705px;color:#9a9a9a">CAP</div>
<div class="t" style="left:1187px;top:705px;color:#f4f4f4">NUM</div>
<div class="t" style="left:1217.5px;top:705px;color:#9a9a9a">SCRL</div>
<div class="t" style="left:1247.5px;top:705px;color:#9a9a9a">CLOUD</div>

</div>
</body></html>
